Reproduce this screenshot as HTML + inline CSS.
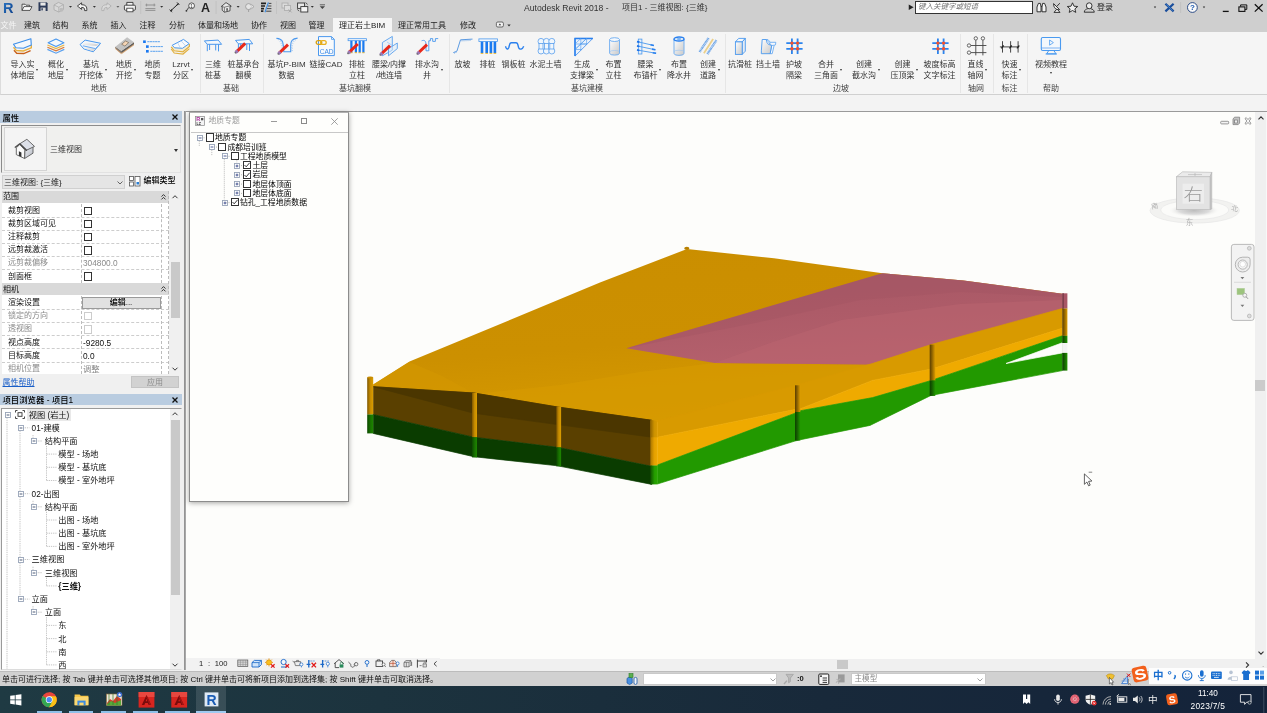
<!DOCTYPE html>
<html lang="zh"><head><meta charset="utf-8"><title>Autodesk Revit 2018</title>
<style>
*{box-sizing:border-box;margin:0;padding:0}
html,body{width:1267px;height:713px;overflow:hidden;background:#f0f0f0}
body{position:relative;font-family:"Liberation Sans","Noto Sans CJK SC",sans-serif;font-size:8px;color:#222;line-height:1}
.abs{position:absolute}
svg{position:absolute;overflow:visible}
.t{position:absolute;white-space:nowrap;line-height:10px;height:10px}
.c{transform:translateX(-50%);text-align:center}
.rb{color:#333}
.arr{width:0;height:0;border-left:1.7px solid transparent;border-right:1.7px solid transparent;border-top:2.2px solid #333}
.hl{height:0;border-top:1px dashed #cdcdcd}
.vl{width:0;border-left:1px dashed #bcbcbc}
.exp{width:5.5px;height:5.5px;border:1px solid #9aa8bc;background:#fff}
.exp:after{content:"";position:absolute;left:0.8px;top:1.3px;width:2px;height:0;border-top:1px solid #5a6a8a}
#root{position:absolute;left:0;top:0;width:1267px;height:713px;overflow:hidden;will-change:transform}

</style></head>
<body>
<div id="root">
<svg style="left:0;top:0;width:0;height:0" width="0" height="0">
<defs>
<linearGradient id="gg1" x1="0" y1="0" x2="1" y2="1"><stop offset="0" stop-color="#fff"/><stop offset="1" stop-color="#c8c8c8"/></linearGradient>
<linearGradient id="gpen" x1="0" y1="0" x2="1" y2="1"><stop offset="0" stop-color="#ff5040"/><stop offset="1" stop-color="#d81808"/></linearGradient>
<g id="pencil"><path d="M0 0L-8.8 8.4" stroke="#e8281a" stroke-width="3" stroke-linecap="butt"/><path d="M-7.6 7.3L-9.6 9.2" stroke="#9a78b8" stroke-width="3"/><path d="M-9.3 8.9L-10.3 9.8" stroke="#666" stroke-width="1.6"/></g>
<symbol id="i_layers1" viewBox="0 0 22 20" overflow="visible">
<path d="M1.9 14.3L4.7 17.3L11.8 17.5L18.6 14.6" fill="none" stroke="#c8601a" stroke-width="1.3"/>
<path d="M1.5 11.2L4.3 14.5L11.4 15L19.3 11.8V9" fill="none" stroke="#e8b040" stroke-width="1.4"/>
<path d="M1.5 8.2L18.9 2.7L19.3 9L11.4 12.2L3.9 11.8Z" fill="#f4f8fc" stroke="#3c8ee8" stroke-width="1.1" stroke-linejoin="round"/>
</symbol>
<symbol id="i_layers2" viewBox="0 0 22 20" overflow="visible">
<path d="M2.4 13.4L11 17.2L19.3 13.4" fill="none" stroke="#5aa0ee" stroke-width="1.2"/>
<path d="M2.4 11.2L11 14.8L19.3 11.2" fill="none" stroke="#d8783a" stroke-width="1.2"/>
<path d="M2.4 9L11 12.6L19.3 9" fill="none" stroke="#e8b848" stroke-width="1.3"/>
<path d="M3.1 6.7L11 3.1L18.9 6.7L11 10.6Z" fill="#f4f8fc" stroke="#4a98ee" stroke-width="1.1" stroke-linejoin="round"/>
</symbol>
<symbol id="i_pit" viewBox="0 0 22 20" overflow="visible">
<path d="M0.050 8.500L5.100 4.100L20.600 7.300L13.300 15.800L3.800 12.900Z" fill="#f2f6fb" stroke="#4a98ee" stroke-width="1" stroke-linejoin="round"/>
<path d="M3.200 6L19.300 8.400L16.100 10.100L2.600 8.800Z" fill="url(#gg1)"/>
<path d="M2.900 9.800L15.500 12.600L13.300 15.200L4.400 12.400Z" fill="url(#gg1)" opacity="0.800"/>
<path d="M2.900 9.800L15.500 12.600L19.900 8.400" fill="none" stroke="#5aa2f0" stroke-width="0.900" stroke-linejoin="round"/>
</symbol>
<symbol id="i_geo" viewBox="0 0 22 20" overflow="visible">
<path d="M2.400 10.700L8.400 15.100V18.300L2.400 12.900Z" fill="#c89464"/>
<path d="M8.400 15.100L21 6.300V9.200L8.400 18.300Z" fill="#d4a474"/>
<path d="M2.400 10.700L8.400 15.100V16.900L2.400 12Z" fill="#7a7a7a"/>
<path d="M8.400 15.100L21 6.300V7.900L8.400 16.900Z" fill="#5c5c5c"/>
<path d="M2.400 10.700L14.100 1.300L21 6.300L8.400 15.100Z" fill="#c2c2c2"/>
<path d="M8.700 8.200L12.500 5L15.700 6.600L11.900 10.100Z" fill="#f4d4b4" stroke="#6a5a4a" stroke-width="0.600" stroke-linejoin="round"/>
</symbol>
<symbol id="i_list" viewBox="0 0 22 20" overflow="visible">
<rect x="1.1" y="4.4" width="2.7" height="2.6" fill="#1a78f0"/><rect x="4" y="9.3" width="2.7" height="2.6" fill="#1a78f0"/><rect x="4" y="14" width="2.7" height="2.6" fill="#1a78f0"/>
<path d="M5.3 5.7H18.3M8.3 10.6H21.3M8.3 15.3H21.3" stroke="#4a98ee" stroke-width="0.9" stroke-dasharray="2.2 0.4"/>
</symbol>
<symbol id="i_zone" viewBox="0 0 22 20" overflow="visible">
<path d="M1.2 13L4.2 17L13 18L19.4 12.6" fill="none" stroke="#e0b040" stroke-width="1.2"/>
<path d="M1.2 10.8L4.2 14.8L13 15.8L19.4 10.4V8" fill="#f6ecd0" stroke="#e0b040" stroke-width="1.2"/>
<path d="M2.2 9.3L13.5 3.4L19.2 7.6L12.5 12.3L4.6 11.8Z" fill="#f8fafc" stroke="#4a98ee" stroke-width="1" stroke-linejoin="round"/>
<path d="M7.5 6.6L10.5 12.1M11 4.8L15.8 10" stroke="#a8c8f0" stroke-width="0.7"/>
</symbol>
<symbol id="i_table" viewBox="0 0 22 20" overflow="visible">
<path d="M2.4 4.9L16.2 4.1L19.6 8.3H5.3Z" fill="#f4f8fc" stroke="#4a98ee" stroke-width="1" stroke-linejoin="round"/>
<path d="M5.3 8.3V15.2M7.6 8.3V14M13.7 8.3V14.4M16.5 8.3V15.4" stroke="#4a98ee" stroke-width="1"/>
</symbol>
<symbol id="i_table2" viewBox="0 0 22 20" overflow="visible">
<path d="M2.5 4.4L16.3 3.4L19.7 7.8H5.4Z" fill="#f4f8fc" stroke="#4a98ee" stroke-width="1" stroke-linejoin="round"/>
<path d="M5.4 7.8V14.6M7.7 7.8V13.4M13.8 7.8V14M16.5 7.8V15" stroke="#4a98ee" stroke-width="1"/>
<use href="#pencil" x="12.2" y="7.4"/>
</symbol>
<symbol id="i_pbim" viewBox="0 0 22 20" overflow="visible">
<path d="M0.4 2.4C4 2.6 5.6 3.2 6.6 6C7.4 8.6 7.6 12 7.8 15.7H14.7V9C14.8 5 16 2.8 21.6 2.1" fill="none" stroke="#4a98ee" stroke-width="1.1"/>
<path d="M2 4L4 2.8M3.6 5.6L5.6 4.4M4.6 7.6L6.6 6.6M5.2 9.8L7.2 9M5.4 12L7.4 11.4M15.2 14L17 14.8M15.2 11.6L17 12.4M15.2 9.2L17 10M15.6 6.8L17.4 7.6M16.6 4.8L18.4 5.6M18.2 3.4L20 4.2" stroke="#8ab8f0" stroke-width="0.6"/>
<use href="#pencil" x="12" y="8.6"/>
</symbol>
<symbol id="i_cad" viewBox="0 0 22 20" overflow="visible">
<path d="M3.5 0.6H16.5L19.3 3.4V19.6H3.5Z" fill="#f8fafc" stroke="#4a98ee" stroke-width="1"/><path d="M16.5 0.6V3.4H19.3" fill="none" stroke="#4a98ee" stroke-width="0.8"/>
<text x="11.6" y="18" font-size="6.6" fill="#3a8ae8" text-anchor="middle" font-family="Liberation Sans,sans-serif">CAD</text>
<rect x="1.2" y="4.6" width="5.6" height="3.8" rx="1.9" fill="none" stroke="#d8a010" stroke-width="1.3"/><rect x="5.6" y="4.6" width="5.6" height="3.8" rx="1.9" fill="none" stroke="#e8b020" stroke-width="1.3"/>
</symbol>
<symbol id="i_pile_r" viewBox="0 0 22 20" overflow="visible">
<rect x="2.1" y="2.7" width="18.3" height="2" fill="#f4f8fc" stroke="#4a98ee" stroke-width="0.8"/>
<path d="M5.4 4.8V16.4M9.9 4.8V16.4M13.7 4.8V16.4M17.4 4.8V16.4" stroke="#1a7af0" stroke-width="2.2"/>
<path d="M4.3 16.7H6.5M8.8 16.7H11M12.6 16.7H14.8M16.3 16.7H18.5" stroke="#e8b020" stroke-width="0.9"/>
<use href="#pencil" x="11.8" y="8"/>
</symbol>
<symbol id="i_wall_r" viewBox="0 0 22 20" overflow="visible">
<path d="M4.4 6.5L14.3 0.4V14.2L4.4 19.8Z" fill="rgba(220,235,250,0.5)" stroke="#5aa0ee" stroke-width="0.9" stroke-linejoin="round"/>
<path d="M10.5 12.6L19.3 7V12.6L10.5 19.8Z" fill="rgba(220,235,250,0.5)" stroke="#5aa0ee" stroke-width="0.9" stroke-linejoin="round"/>
<path d="M9 6L14.3 9.5M10.5 12.6L14.3 10" stroke="#8ab8f0" stroke-width="0.6"/>
<use href="#pencil" x="12" y="9.6"/>
</symbol>
<symbol id="i_drain" viewBox="0 0 22 20" overflow="visible">
<path d="M5.6 4.8C8.6 3.6 9.8 5 10 8.2V14.8H12.8V4.8H14.4V2.6H16.7V5.4H19.4V2.6H22.2" fill="none" stroke="#4a98ee" stroke-width="0.9"/>
<use href="#pencil" x="11" y="8.6"/>
</symbol>
<symbol id="i_slope" viewBox="0 0 22 20" overflow="visible">
<path d="M1.3 16.6L4.9 15.2L8.5 3.8L20.5 3.1" fill="none" stroke="#4a90e0" stroke-width="0.9"/>
<path d="M10 4.2V5.4M12 4.1V5.3M14 4V5.2M16 3.9V5.1M18 3.8V5M2.5 16.6V17.6M4 16V17" stroke="#4a90e0" stroke-width="0.6"/>
</symbol>
<symbol id="i_pile" viewBox="0 0 22 20" overflow="visible">
<rect x="1.9" y="2.9" width="18.5" height="2.6" fill="#f4f8fc" stroke="#4a98ee" stroke-width="0.8"/>
<path d="M5 5.7V17M9.7 5.7V17M13.9 5.7V17M17.9 5.7V17" stroke="#1a7af0" stroke-width="2.6"/>
<path d="M3.7 17.4H6.3M8.4 17.4H11M12.6 17.4H15.2M16.6 17.4H19.2" stroke="#e8b020" stroke-width="0.9"/>
</symbol>
<symbol id="i_sheet" viewBox="0 0 22 20" overflow="visible">
<path d="M2.6 10.2C2.8 13 4.8 14 5.8 11.6C6.6 9.4 6.2 6.7 8.4 6.7H13C15.2 6.7 14.8 9.4 15.6 11.6C16.8 14.2 19.4 13.4 20.7 10.2" fill="none" stroke="#2a80ee" stroke-width="1.4"/>
</symbol>
<symbol id="i_cement" viewBox="0 0 22 20" overflow="visible">
<g fill="#f0f6fc" stroke="#5aa0ee" stroke-width="0.8"><circle cx="6" cy="5.4" r="3"/><circle cx="11.4" cy="5.4" r="3"/><circle cx="16.8" cy="5.4" r="3"/><circle cx="6" cy="15" r="3"/><circle cx="11.4" cy="15" r="3"/><circle cx="16.8" cy="15" r="3"/><rect x="4" y="7.4" width="4" height="5.6"/><rect x="9.4" y="7.4" width="4" height="5.6"/><rect x="14.8" y="7.4" width="4" height="5.6"/></g>
</symbol>
<symbol id="i_truss" viewBox="0 0 22 20" overflow="visible">
<path d="M4 2.4H21.8L4 20.1Z" fill="#eaf1fa" stroke="#3a8aee" stroke-width="0.800" stroke-linejoin="round"/><path d="M4 20.100V2.400H21.800" fill="none" stroke="#2a80ee" stroke-width="1.500" stroke-linejoin="miter"/>
<path d="M4 8H16M4 13.5H10.6M9.8 2.4V14.4M15.6 2.4V8.6M4 8L9.8 2.4M4 13.5L15.6 2.4M9.8 8L15.6 2.4M4 13.5L9.8 8M9.8 8L15.6 8" stroke="#4a98ee" stroke-width="0.6" fill="none"/>
</symbol>
<symbol id="i_cyl" viewBox="0 0 22 20" overflow="visible">
<path d="M6.6 3.6V17.4A5 2 0 0 0 16.5 17.4V3.6" fill="url(#gg1)" stroke="#6aaaf0" stroke-width="0.9"/>
<ellipse cx="11.55" cy="3.6" rx="4.95" ry="1.9" fill="#f4f8fc" stroke="#6aaaf0" stroke-width="0.9"/>
<path d="M6.6 16A5 1.8 0 0 1 16.5 16" fill="none" stroke="#9ac4f4" stroke-width="0.6"/>
</symbol>
<symbol id="i_anchor" viewBox="0 0 22 20" overflow="visible">
<rect x="3.3" y="3.1" width="3.6" height="14.9" fill="#e8f0fa" stroke="#4a98ee" stroke-width="0.8"/>
<path d="M3.3 5.9L18.9 9.5M3.3 10.2L20.4 13.8M3.3 14.2L21.1 17.3" stroke="#4a98ee" stroke-width="0.9"/>
<path d="M15.5 8.7L18.9 9.5M17 13.1L20.4 13.8M17.7 16.7L21.1 17.3" stroke="#2a80ee" stroke-width="1.6"/>
<path d="M2 5.6L4.4 6.2M2 9.9L4.4 10.5M2 13.9L4.4 14.5" stroke="#1a70e8" stroke-width="1.8"/>
</symbol>
<symbol id="i_well" viewBox="0 0 22 20" overflow="visible">
<path d="M6 3V17.4A5 2 0 0 0 16 17.4V3" fill="url(#gg1)" stroke="#6aaaf0" stroke-width="0.9"/>
<ellipse cx="11" cy="3" rx="5" ry="2" fill="#f4f8fc" stroke="#2a80ee" stroke-width="1.4"/>
<ellipse cx="11" cy="3" rx="2.6" ry="0.8" fill="#4a98ee"/>
<path d="M6 16A5 1.8 0 0 1 16 16" fill="none" stroke="#9ac4f4" stroke-width="0.6"/>
</symbol>
<symbol id="i_road" viewBox="0 0 22 20" overflow="visible">
<path d="M2.6 15.9L11.8 1.7" stroke="#5a9ae6" stroke-width="2.4" stroke-dasharray="0.8 0.5"/>
<path d="M6.9 17.3L16.1 3.1" stroke="#ecd08a" stroke-width="1.8"/>
<path d="M10.4 18L19.6 3.8" stroke="#5a9ae6" stroke-width="2.4" stroke-dasharray="0.8 0.5"/>
</symbol>
<symbol id="i_box" viewBox="0 0 22 20" overflow="visible">
<path d="M6.4 5.9L9.7 2.4H16.3L13.2 5.9Z" fill="#f4f8fc" stroke="#4a98ee" stroke-width="0.9" stroke-linejoin="round"/>
<path d="M13.2 5.9L16.3 2.4V15.2L13.2 18.4Z" fill="#e4ecf6" stroke="#4a98ee" stroke-width="0.9" stroke-linejoin="round"/>
<rect x="6.4" y="5.9" width="6.8" height="12.5" fill="url(#gg1)" stroke="#4a98ee" stroke-width="0.9"/>
</symbol>
<symbol id="i_retain" viewBox="0 0 22 20" overflow="visible">
<path d="M9.300 3.500H10.900L13.400 6.300H18.800L18.500 8.800L17.200 9.200L15.200 17.700H13.100L14.700 9.500Z" fill="#f6f9fd" stroke="#5aa2f0" stroke-width="0.800" stroke-linejoin="round"/>
<path d="M5.200 3.500H9.300L9.600 5.400C10 7 10.600 7.800 11.600 8.400L14.700 9.500L13.100 17.700H4.300L4.400 14.200Z" fill="url(#gg1)" stroke="#4a98ee" stroke-width="0.900" stroke-linejoin="round"/>
<path d="M11.600 8.400L13.400 6.300M14.700 9.500L17.200 9.200" fill="none" stroke="#5aa2f0" stroke-width="0.700"/>
</symbol>
<symbol id="i_hash" viewBox="0 0 22 20" overflow="visible">
<path d="M8.9 2.4V18M14.6 2.4V18M3.3 7.1H19.6M3.3 12.8H19.6" stroke="#2a84ee" stroke-width="1.800"/>
<g fill="#f4502c"><circle cx="8.9" cy="7.1" r="1.700"/><circle cx="14.6" cy="7.1" r="1.700"/><circle cx="8.9" cy="12.8" r="1.700"/><circle cx="14.6" cy="12.8" r="1.700"/></g>
</symbol>
<symbol id="i_grid" viewBox="0 0 22 20" overflow="visible">
<path d="M10.8 4.2V19.4M17.9 4.2V19.4M5.8 9.5H21.4M5.8 16.6H21.4" stroke="#444" stroke-width="0.9"/>
<g fill="#f8f8f8" stroke="#444" stroke-width="0.8"><circle cx="10.8" cy="2.4" r="1.7"/><circle cx="17.9" cy="2.4" r="1.7"/><circle cx="4" cy="9.5" r="1.7"/><circle cx="4" cy="16.6" r="1.7"/></g>
</symbol>
<symbol id="i_dim" viewBox="0 0 22 20" overflow="visible">
<path d="M0.9 10.9H20.1M3.5 5.2V16.6M11.6 5.2V16.6M19.1 5.2V16.6" stroke="#333" stroke-width="0.9"/>
<path d="M2.3 12.3L4.7 9.5M10.4 12.3L12.8 9.5M17.9 12.3L20.3 9.5" stroke="#222" stroke-width="1.2"/>
</symbol>
<symbol id="i_video" viewBox="0 0 22 20" overflow="visible">
<rect x="1.3" y="1.5" width="19.2" height="13" rx="1.4" fill="#f4f8fc" stroke="#4a9af0" stroke-width="1.1"/>
<path d="M1.3 12H20.5" stroke="#4a9af0" stroke-width="0.7"/>
<path d="M9.6 4L13.4 6.6L9.6 9.2Z" fill="none" stroke="#4a9af0" stroke-width="0.8" stroke-linejoin="round"/>
<path d="M8.8 14.5L6.6 17.8H16L13.8 14.5" fill="none" stroke="#4a9af0" stroke-width="1"/><path d="M5.6 18H17" stroke="#4a9af0" stroke-width="1"/>
</symbol>
</defs></svg>

<div class="abs" id="titlebar" style="left:0;top:0;width:1267px;height:32px;background:#cfcfcf"></div>
<div class="t" style="left:524px;top:3.100px;font-size:8.600px;color:#333">Autodesk Revit 2018 -</div>
<div class="t" style="left:622px;top:3.300px;font-size:8px;color:#333">项目1 - 三维视图: {三维}</div>
<div class="abs" style="left:914.500px;top:0.800px;width:118.500px;height:13.600px;background:#fff;border:1px solid #333;border-top-width:1px"></div>
<div class="t" style="left:918px;top:2px;font-size:7.500px;color:#777;font-style:italic">键入关键字或短语</div>
<div class="t" style="left:908px;top:2px;font-size:6px;color:#222">▶</div>
<div class="t" style="left:1097px;top:3px;font-size:8px;color:#222">登录</div>
<!-- tabs -->
<div class="abs" style="left:333px;top:17.500px;width:59px;height:15px;background:#f5f5f5"></div>
<div class="t c" style="left:8.500px;top:21px;color:#f6f6f6">文件</div>
<div class="t c" style="left:32px;top:21px">建筑</div>
<div class="t c" style="left:60.5px;top:21px">结构</div>
<div class="t c" style="left:89.5px;top:21px">系统</div>
<div class="t c" style="left:118.5px;top:21px">插入</div>
<div class="t c" style="left:147.5px;top:21px">注释</div>
<div class="t c" style="left:177px;top:21px">分析</div>
<div class="t c" style="left:218px;top:21px">体量和场地</div>
<div class="t c" style="left:259px;top:21px">协作</div>
<div class="t c" style="left:288px;top:21px">视图</div>
<div class="t c" style="left:316.5px;top:21px">管理</div>
<div class="t c" style="left:362px;top:21px">理正岩土BIM</div>
<div class="t c" style="left:422px;top:21px">理正常用工具</div>
<div class="t c" style="left:468px;top:21px">修改</div>

<svg id="qat" style="left:0;top:0" width="1267" height="17" viewBox="0 0 1267 17">
<defs><linearGradient id="gR" x1="0" y1="0" x2="1" y2="1"><stop offset="0" stop-color="#2a78c8"/><stop offset="1" stop-color="#0e3c84"/></linearGradient></defs>
<text x="3" y="13" font-size="14.5" font-weight="bold" fill="url(#gR)" font-family="Liberation Sans,sans-serif" textLength="10.5" lengthAdjust="spacingAndGlyphs">R</text>
<!-- open -->
<path d="M22 10.4V4.2H25L26 5.2H29.6V6.6" fill="#f0f0f0" stroke="#333" stroke-width="0.8"/><path d="M22 10.4L24 6.6H32L30 10.4Z" fill="#fafafa" stroke="#333" stroke-width="0.8" stroke-linejoin="round"/>
<!-- save -->
<path d="M38.5 2.2H46.6L47.6 3.2V11H38.5Z" fill="#2c3a58"/><rect x="40.4" y="2.6" width="5.2" height="3" fill="#e8e8e8"/><rect x="40.6" y="7.6" width="5" height="3.4" fill="#d8d8d8"/><rect x="41.4" y="8.2" width="1.4" height="2.2" fill="#2c3a58"/>
<!-- sync (gray) -->
<path d="M54 5L58.5 2.4L63.4 4.6V9.6L58.8 12L54 9.8Z" fill="#d8d8d8" stroke="#a8a8a8" stroke-width="0.8" stroke-linejoin="round"/><path d="M54 5L58.8 7.2L63.4 4.6M58.8 7.2V12" fill="none" stroke="#a8a8a8" stroke-width="0.7"/><circle cx="61.4" cy="9.8" r="2" fill="#bcbcbc"/>
<path d="M69 6L70.5 7.8L72 6Z" fill="#333"/>
<!-- undo -->
<path d="M77.4 6L81.6 2.8V4.8C85.6 4.6 87.2 6.6 86.8 10.6H84.6C84.8 8.2 84 7.4 81.6 7.4V9.4Z" fill="#f4f4f4" stroke="#333" stroke-width="0.9" stroke-linejoin="round"/>
<path d="M92.9 6L94.4 7.8L95.900 6Z" fill="#333"/>
<!-- redo gray -->
<path d="M111.2 6L107 2.8V4.8C103 4.600 101.400 6.600 101.800 10.600H104C103.800 8.200 104.600 7.400 107 7.400V9.400Z" fill="#dadada" stroke="#b0b0b0" stroke-width="0.9" stroke-linejoin="round"/>
<path d="M116.400 6L117.900 7.800L119.400 6Z" fill="#666"/>
<!-- print -->
<path d="M126.800 5.200V2.400H133V5.200" fill="#f4f4f4" stroke="#333" stroke-width="0.9"/><rect x="124.400" y="5.200" width="11" height="5" rx="1" fill="#f4f4f4" stroke="#333" stroke-width="0.9"/><rect x="126.800" y="8.200" width="6.200" height="3.600" fill="#fff" stroke="#333" stroke-width="0.8"/>
<path d="M140.700 1V14" stroke="#bdbdbd" stroke-width="0.7"/>
<!-- measure gray -->
<path d="M145.400 5H155.400M145.400 8.600H155.400M145.400 10.400H155.400" stroke="#8a8a8a" stroke-width="0.9"/><path d="M146.600 3.600V6.400M154.200 3.600V6.400" stroke="#8a8a8a" stroke-width="0.8"/>
<path d="M160.200 6L161.700 7.800L163.200 6Z" fill="#333"/>
<!-- aligned dim -->
<path d="M170.500 11L178.500 3.600" stroke="#222" stroke-width="1"/><path d="M169.600 9.600L172 12.200M177 2.400L179.400 5" stroke="#222" stroke-width="0.9"/><path d="M170.500 11L172.600 10.400L171.400 9Z M178.500 3.600L176.400 4.200L177.600 5.600Z" fill="#222"/>
<!-- tag -->
<circle cx="191.600" cy="5.800" r="2.900" fill="#f8f8f8" stroke="#333" stroke-width="0.8"/><text x="191.600" y="7.600" font-size="4.600" text-anchor="middle" fill="#222" font-family="Liberation Sans,sans-serif">1</text><path d="M188.800 7.400L186.400 10.800" stroke="#333" stroke-width="0.9"/><circle cx="186.400" cy="10.800" r="0.900" fill="#333"/>
<text x="201" y="12" font-size="12.500" font-weight="bold" fill="#222" font-family="Liberation Sans,sans-serif">A</text>
<path d="M216.100 1V14" stroke="#bdbdbd" stroke-width="0.700"/>
<!-- 3d house -->
<path d="M221.400 6.400L226 2.600L231 5.800V6.800L230 6.400V10.800L224.400 12.200L222.200 10.200V6.600Z" fill="#e8e8e8" stroke="#444" stroke-width="0.9" stroke-linejoin="round"/><path d="M224.400 7.200V12.200M224.400 7.200L230 5.800M221.400 6.400L224.400 7.200" fill="none" stroke="#555" stroke-width="0.7"/><rect x="226.200" y="8.200" width="1.800" height="2.600" fill="#666"/>
<path d="M236.600 6L238.100 7.800L239.600 6Z" fill="#333"/>
<!-- section gray -->
<circle cx="248.600" cy="6.600" r="3" fill="#e4e4e4" stroke="#9c9c9c" stroke-width="0.900"/><path d="M251.400 4.400L254 6.600L251.400 8.800" fill="#e4e4e4" stroke="#9c9c9c" stroke-width="0.800"/><path d="M248.600 9.600V12" stroke="#9c9c9c" stroke-width="0.900"/>
<!-- thin lines -->
<path d="M261 3.400H266M261 6H265M261 8.600H264M261 11.200H263.400" stroke="#222" stroke-width="1.700"/><path d="M268.600 3.400H271.400M267.800 6H271.400M267 8.600H271.400M266.200 11.200H271.400" stroke="#222" stroke-width="0.800"/><path d="M268.400 2.400L265 12.200" stroke="#3a8ee8" stroke-width="1.100"/>
<path d="M276.500 1V14" stroke="#bdbdbd" stroke-width="0.700"/>
<!-- close hidden gray -->
<rect x="282" y="3" width="6" height="5" fill="#dcdcdc" stroke="#aaa" stroke-width="0.800"/><rect x="284.400" y="5.400" width="6" height="5" fill="#dcdcdc" stroke="#aaa" stroke-width="0.800"/><path d="M288.600 9.400L291.600 12.400M291.600 9.400L288.600 12.400" stroke="#aaa" stroke-width="1"/>
<!-- switch windows -->
<rect x="297.600" y="3" width="7" height="5.400" fill="#e8e8e8" stroke="#333" stroke-width="0.900"/><rect x="300.800" y="6.600" width="7" height="5.400" fill="#f4f4f4" stroke="#333" stroke-width="0.900"/><path d="M305.600 2.600L307.600 4.400M299 11.200L297.400 9.400" stroke="#333" stroke-width="0.800"/>
<path d="M310.800 6L312.300 7.800L313.800 6Z" fill="#333"/>
<path d="M319.800 4.800H325" stroke="#444" stroke-width="0.800"/><path d="M319.800 6.200L322.400 9L325 6.200Z" fill="#444"/>
<!-- right side -->
<g stroke="#222" stroke-width="0.900" fill="#f4f4f4"><path d="M1037 11.800V7L1038.400 3.400H1040.400L1041 7V11.800ZM1042 11.800V7L1042.600 3.400H1044.600L1046 7V11.800Z"/><path d="M1041 6.400H1042" fill="none"/></g>
<path d="M1053.600 3.600C1053.600 8 1056 10 1059.600 9.600ZM1056.600 9.400L1054 12.400H1060L1057.600 9.600M1056.800 6.400L1059.800 3.200" fill="#eee" stroke="#222" stroke-width="0.900" stroke-linejoin="round"/>
<path d="M1072.500 2.800L1074 6.200L1077.700 6.500L1074.900 8.900L1075.800 12.400L1072.500 10.500L1069.200 12.400L1070.100 8.900L1067.300 6.500L1071 6.200Z" fill="#f0f0f0" stroke="#222" stroke-width="0.900" stroke-linejoin="round"/>
<path d="M1086.400 5.800a2.800 3 0 1 1 5.600 0a2.800 3 0 1 1 -5.600 0ZM1084.200 12.200C1084.600 9.800 1086 9.200 1087.600 8.800M1094.300 12.200C1093.900 9.800 1092.500 9.200 1090.900 8.800M1084.200 12.200H1094.300" fill="#eee" stroke="#222" stroke-width="0.900"/>
<path d="M1153.800 6.600L1155 8.200L1156.200 6.600Z" fill="#333"/>
<path d="M1165.400 3.800L1173.600 11.400M1173.600 3.800L1165.400 11.400" stroke="#1a4e9c" stroke-width="2.200"/><path d="M1166.400 4.600L1172.600 10.600" stroke="#5a9ae0" stroke-width="0.700"/>
<path d="M1180.600 2V13" stroke="#bdbdbd" stroke-width="0.700"/>
<circle cx="1192.400" cy="7.500" r="4.900" fill="#fafafa" stroke="#1a3c7c" stroke-width="0.900"/><text x="1192.400" y="10.400" font-size="8" font-weight="bold" fill="#1a58b0" text-anchor="middle" font-family="Liberation Sans,sans-serif">?</text>
<path d="M1202.800 6.600L1204 8.200L1205.200 6.600Z" fill="#333"/>
<path d="M1222.800 11.400H1228.700" stroke="#111" stroke-width="1.300"/>
<path d="M1240.600 6.600V4.900H1246.800V9.400H1245" fill="none" stroke="#111" stroke-width="1"/><rect x="1238.900" y="6.900" width="6" height="4.500" fill="none" stroke="#111" stroke-width="1.100"/>
<path d="M1254.800 4.200L1262.600 11.600M1262.600 4.200L1254.800 11.600" stroke="#111" stroke-width="1.300"/>
<!-- tab row icon -->
<rect x="496.400" y="22" width="7" height="5" rx="1.400" fill="#f4f4f4" stroke="#333" stroke-width="0.700"/><path d="M498.600 25.200L499.900 23.600L501.200 25.200Z" fill="#333"/>
</svg>
<svg style="left:507px;top:24px" width="4" height="3" viewBox="0 0 4 3"><path d="M0.300 0.400L2 2.400L3.700 0.400Z" fill="#333"/></svg>

<div class="abs" id="ribbon" style="left:0;top:32px;width:1267px;height:62.800px;background:#f5f5f5;border-bottom:1px solid #d0d0d0;border-left:1px solid #dcdcdc"></div>
<div class="abs" style="left:0;top:94.800px;width:1267px;height:16.200px;background:#f3f3f3"></div>
<div class="abs" style="left:199.5px;top:34px;width:1px;height:59px;background:#e6e6e6"></div>
<div class="abs" style="left:262.5px;top:34px;width:1px;height:59px;background:#e6e6e6"></div>
<div class="abs" style="left:448.5px;top:34px;width:1px;height:59px;background:#e6e6e6"></div>
<div class="abs" style="left:724.5px;top:34px;width:1px;height:59px;background:#e6e6e6"></div>
<div class="abs" style="left:959.5px;top:34px;width:1px;height:59px;background:#e6e6e6"></div>
<div class="abs" style="left:992.5px;top:34px;width:1px;height:59px;background:#e6e6e6"></div>
<div class="abs" style="left:1026.5px;top:34px;width:1px;height:59px;background:#e6e6e6"></div>
<div class="t c rb" style="left:22.5px;top:60.2px">导入实</div>
<div class="t c rb" style="left:22.5px;top:70.8px">体地层</div>
<div class="abs arr" style="left:36.3px;top:69.300px"></div>
<svg style="left:11.5px;top:36px" width="22" height="20" viewBox="0 0 22 20"><use href="#i_layers1"/></svg>
<div class="t c rb" style="left:56.0px;top:60.2px">概化</div>
<div class="t c rb" style="left:56.0px;top:70.8px">地层</div>
<div class="abs arr" style="left:65.8px;top:69.300px"></div>
<svg style="left:45.0px;top:36px" width="22" height="20" viewBox="0 0 22 20"><use href="#i_layers2"/></svg>
<div class="t c rb" style="left:91.0px;top:60.2px">基坑</div>
<div class="t c rb" style="left:91.0px;top:70.8px">开挖体</div>
<div class="abs arr" style="left:104.8px;top:69.300px"></div>
<svg style="left:80.0px;top:36px" width="22" height="20" viewBox="0 0 22 20"><use href="#i_pit"/></svg>
<div class="t c rb" style="left:124.0px;top:60.2px">地质</div>
<div class="t c rb" style="left:124.0px;top:70.8px">开挖</div>
<div class="abs arr" style="left:133.8px;top:69.300px"></div>
<svg style="left:113.0px;top:36px" width="22" height="20" viewBox="0 0 22 20"><use href="#i_geo"/></svg>
<div class="t c rb" style="left:152.5px;top:60.2px">地质</div>
<div class="t c rb" style="left:152.5px;top:70.8px">专题</div>
<svg style="left:141.5px;top:36px" width="22" height="20" viewBox="0 0 22 20"><use href="#i_list"/></svg>
<div class="t c rb" style="left:181.0px;top:60.2px">Lzrvt</div>
<div class="t c rb" style="left:181.0px;top:70.8px">分区</div>
<div class="abs arr" style="left:190.8px;top:69.300px"></div>
<svg style="left:170.0px;top:36px" width="22" height="20" viewBox="0 0 22 20"><use href="#i_zone"/></svg>
<div class="t c rb" style="left:213.0px;top:60.2px">三维</div>
<div class="t c rb" style="left:213.0px;top:70.8px">桩基</div>
<svg style="left:202.0px;top:36px" width="22" height="20" viewBox="0 0 22 20"><use href="#i_table"/></svg>
<div class="t c rb" style="left:243.5px;top:60.2px">桩基承台</div>
<div class="t c rb" style="left:243.5px;top:70.8px">翻模</div>
<svg style="left:232.5px;top:36px" width="22" height="20" viewBox="0 0 22 20"><use href="#i_table2"/></svg>
<div class="t c rb" style="left:286.5px;top:60.2px">基坑P-BIM</div>
<div class="t c rb" style="left:286.5px;top:70.8px">数据</div>
<svg style="left:275.5px;top:36px" width="22" height="20" viewBox="0 0 22 20"><use href="#i_pbim"/></svg>
<div class="t c rb" style="left:326.0px;top:60.2px">链接CAD</div>
<svg style="left:315.0px;top:36px" width="22" height="20" viewBox="0 0 22 20"><use href="#i_cad"/></svg>
<div class="t c rb" style="left:357.0px;top:60.2px">排桩</div>
<div class="t c rb" style="left:357.0px;top:70.8px">立柱</div>
<svg style="left:346.0px;top:36px" width="22" height="20" viewBox="0 0 22 20"><use href="#i_pile_r"/></svg>
<div class="t c rb" style="left:389.0px;top:60.2px">腰梁/内撑</div>
<div class="t c rb" style="left:389.0px;top:70.8px">/地连墙</div>
<svg style="left:378.0px;top:36px" width="22" height="20" viewBox="0 0 22 20"><use href="#i_wall_r"/></svg>
<div class="t c rb" style="left:427.0px;top:60.2px">排水沟</div>
<div class="t c rb" style="left:427.0px;top:70.8px">井</div>
<div class="abs arr" style="left:440.8px;top:69.300px"></div>
<svg style="left:416.0px;top:36px" width="22" height="20" viewBox="0 0 22 20"><use href="#i_drain"/></svg>
<div class="t c rb" style="left:462.5px;top:60.2px">放坡</div>
<svg style="left:451.5px;top:36px" width="22" height="20" viewBox="0 0 22 20"><use href="#i_slope"/></svg>
<div class="t c rb" style="left:487.5px;top:60.2px">排桩</div>
<svg style="left:476.5px;top:36px" width="22" height="20" viewBox="0 0 22 20"><use href="#i_pile"/></svg>
<div class="t c rb" style="left:513.5px;top:60.2px">钢板桩</div>
<svg style="left:502.5px;top:36px" width="22" height="20" viewBox="0 0 22 20"><use href="#i_sheet"/></svg>
<div class="t c rb" style="left:545.5px;top:60.2px">水泥土墙</div>
<svg style="left:534.5px;top:36px" width="22" height="20" viewBox="0 0 22 20"><use href="#i_cement"/></svg>
<div class="t c rb" style="left:582.0px;top:60.2px">生成</div>
<div class="t c rb" style="left:582.0px;top:70.8px">支撑梁</div>
<div class="abs arr" style="left:595.8px;top:69.300px"></div>
<svg style="left:571.0px;top:36px" width="22" height="20" viewBox="0 0 22 20"><use href="#i_truss"/></svg>
<div class="t c rb" style="left:613.5px;top:60.2px">布置</div>
<div class="t c rb" style="left:613.5px;top:70.8px">立柱</div>
<svg style="left:602.5px;top:36px" width="22" height="20" viewBox="0 0 22 20"><use href="#i_cyl"/></svg>
<div class="t c rb" style="left:645.5px;top:60.2px">腰梁</div>
<div class="t c rb" style="left:645.5px;top:70.8px">布锚杆</div>
<div class="abs arr" style="left:659.3px;top:69.300px"></div>
<svg style="left:634.5px;top:36px" width="22" height="20" viewBox="0 0 22 20"><use href="#i_anchor"/></svg>
<div class="t c rb" style="left:679.0px;top:60.2px">布置</div>
<div class="t c rb" style="left:679.0px;top:70.8px">降水井</div>
<svg style="left:668.0px;top:36px" width="22" height="20" viewBox="0 0 22 20"><use href="#i_well"/></svg>
<div class="t c rb" style="left:708.0px;top:60.2px">创建</div>
<div class="t c rb" style="left:708.0px;top:70.8px">道路</div>
<div class="abs arr" style="left:717.8px;top:69.300px"></div>
<svg style="left:697.0px;top:36px" width="22" height="20" viewBox="0 0 22 20"><use href="#i_road"/></svg>
<div class="t c rb" style="left:740.0px;top:60.2px">抗滑桩</div>
<svg style="left:729.0px;top:36px" width="22" height="20" viewBox="0 0 22 20"><use href="#i_box"/></svg>
<div class="t c rb" style="left:768.0px;top:60.2px">挡土墙</div>
<svg style="left:757.0px;top:36px" width="22" height="20" viewBox="0 0 22 20"><use href="#i_retain"/></svg>
<div class="t c rb" style="left:794.0px;top:60.2px">护坡</div>
<div class="t c rb" style="left:794.0px;top:70.8px">隔梁</div>
<svg style="left:783.0px;top:36px" width="22" height="20" viewBox="0 0 22 20"><use href="#i_hash"/></svg>
<div class="t c rb" style="left:826.0px;top:60.2px">合并</div>
<div class="t c rb" style="left:826.0px;top:70.8px">三角面</div>
<div class="abs arr" style="left:839.8px;top:69.300px"></div>
<div class="t c rb" style="left:864.0px;top:60.2px">创建</div>
<div class="t c rb" style="left:864.0px;top:70.8px">截水沟</div>
<div class="abs arr" style="left:877.8px;top:69.300px"></div>
<div class="t c rb" style="left:902.5px;top:60.2px">创建</div>
<div class="t c rb" style="left:902.5px;top:70.8px">压顶梁</div>
<div class="abs arr" style="left:916.3px;top:69.300px"></div>
<div class="t c rb" style="left:939.5px;top:60.2px">坡度标高</div>
<div class="t c rb" style="left:939.5px;top:70.8px">文字标注</div>
<svg style="left:928.5px;top:36px" width="22" height="20" viewBox="0 0 22 20"><use href="#i_hash"/></svg>
<div class="t c rb" style="left:975.5px;top:60.2px">直线</div>
<div class="t c rb" style="left:975.5px;top:70.8px">轴网</div>
<div class="abs arr" style="left:985.3px;top:69.300px"></div>
<svg style="left:964.5px;top:36px" width="22" height="20" viewBox="0 0 22 20"><use href="#i_grid"/></svg>
<div class="t c rb" style="left:1009.5px;top:60.2px">快速</div>
<div class="t c rb" style="left:1009.5px;top:70.8px">标注</div>
<div class="abs arr" style="left:1019.3px;top:69.300px"></div>
<svg style="left:998.5px;top:36px" width="22" height="20" viewBox="0 0 22 20"><use href="#i_dim"/></svg>
<div class="t c rb" style="left:1051.0px;top:60.2px">视频教程</div>
<svg style="left:1040.0px;top:36px" width="22" height="20" viewBox="0 0 22 20"><use href="#i_video"/></svg>
<div class="abs arr" style="left:1049.5px;top:72px"></div>
<div class="t c" style="left:99.0px;top:84.2px;color:#444">地质</div>
<div class="t c" style="left:231.0px;top:84.2px;color:#444">基础</div>
<div class="t c" style="left:355.0px;top:84.2px;color:#444">基坑翻模</div>
<div class="t c" style="left:587.0px;top:84.2px;color:#444">基坑建模</div>
<div class="t c" style="left:841.0px;top:84.2px;color:#444">边坡</div>
<div class="t c" style="left:976.0px;top:84.2px;color:#444">轴网</div>
<div class="t c" style="left:1009.5px;top:84.2px;color:#444">标注</div>
<div class="t c" style="left:1051.0px;top:84.2px;color:#444">帮助</div>
<div class="abs" style="left:0;top:110px;width:184px;height:562px;background:#f0f0f0"></div>
<div class="abs" style="left:0;top:111px;width:181.5px;height:12px;background:#b9cce0"></div>
<div class="t" style="left:2.5px;top:112.800px;color:#000;font-weight:500;font-size:8.400px">属性</div>
<svg style="left:171.5px;top:114px" width="6" height="6" viewBox="0 0 6 6"><path d="M0.5 0.5L5.5 5.5M5.5 0.5L0.5 5.5" stroke="#111" stroke-width="1.3"/></svg>
<div class="abs" style="left:1px;top:124.500px;width:180px;height:48.500px;background:#f0f0ee;border:1px solid #e2e2e2;border-top-color:#8c8c8c;border-left-color:#8c8c8c"></div>
<div class="abs" style="left:3.5px;top:127px;width:43.5px;height:43.5px;background:#f4f4f4;border:1px solid #d4d4d4"></div>
<svg style="left:14px;top:138px" width="22" height="22" viewBox="0 0 22 22"><defs><linearGradient id="hw" x1="0" y1="0" x2="1" y2="1"><stop offset="0" stop-color="#eceef2"/><stop offset="1" stop-color="#b4b8c2"/></linearGradient></defs><path d="M2.3 9.8L5.8 6.500L11 12.200L10.600 20.500L2.300 16.600Z" fill="#fbfbfb" stroke="#5a5a5a" stroke-width="0.900" stroke-linejoin="round"/><path d="M11 12.200L19 8.600V15.200L10.600 20.500Z" fill="url(#hw)" stroke="#5a5a5a" stroke-width="0.900" stroke-linejoin="round"/><path d="M5.800 5.800L12.900 1.300L20.500 8.400L12.500 12.200Z" fill="#dde0e8" stroke="#5a5a5a" stroke-width="0.900" stroke-linejoin="round"/><path d="M1.200 9.200L5.800 5.800L12.500 12.200" fill="none" stroke="#4a4a4a" stroke-width="1.300" stroke-linejoin="round" stroke-linecap="round"/><path d="M4.900 13.200L7.400 14.400V18.900L4.900 17.700Z" fill="#333"/></svg>
<div class="t" style="left:50px;top:145px;color:#333">三维视图</div>
<div class="abs arr" style="left:173.5px;top:148.5px;border-left-width:2.5px;border-right-width:2.5px;border-top-width:3px"></div>
<div class="abs" style="left:2px;top:175px;width:123px;height:14px;background:#e5e5e5;border:1px solid #d0d0d0"></div>
<div class="t" style="left:4px;top:177.5px;color:#222">三维视图: {三维}</div>
<svg style="left:116.5px;top:180.5px" width="6" height="4" viewBox="0 0 6 4"><path d="M0.5 0.5L3 3L5.5 0.5" stroke="#555" stroke-width="0.9" fill="none"/></svg>
<svg style="left:129px;top:175.5px" width="12" height="11" viewBox="0 0 12 11"><rect x="0.5" y="0.5" width="4" height="4" fill="#fff" stroke="#555" stroke-width="0.8"/><rect x="0.5" y="6" width="4" height="4" fill="#fff" stroke="#555" stroke-width="0.8"/><rect x="6" y="0.5" width="5" height="9.5" fill="#fff" stroke="#555" stroke-width="0.8"/><rect x="7.5" y="6" width="2.5" height="2.5" fill="#2a7fd4"/></svg>
<div class="t" style="left:143.5px;top:176px;color:#000;font-weight:500">编辑类型</div>
<div class="abs" style="left:2px;top:190.5px;width:166.5px;height:184px;background:#fff"></div>
<div class="abs" style="left:2px;top:190.7px;width:166.5px;height:12.4px;background:#d9d9d9"></div>
<div class="t" style="left:3px;top:192.2px;color:#111">范围</div>
<svg style="left:160.5px;top:193.9px" width="5" height="6" viewBox="0 0 5 6"><path d="M0.5 2.6L2.5 0.6L4.5 2.6M0.5 5.4L2.5 3.4L4.5 5.4" stroke="#222" stroke-width="0.9" fill="none"/></svg>
<div class="t" style="left:8px;top:205.7px;color:#111">裁剪视图</div>
<div class="abs" style="left:83.5px;top:206.5px;width:8.5px;height:8.5px;background:#fff;border:1px solid #333"></div>
<div class="abs hl" style="left:2px;top:216.6px;width:166.5px"></div>
<div class="t" style="left:8px;top:218.9px;color:#111">裁剪区域可见</div>
<div class="abs" style="left:83.5px;top:219.7px;width:8.5px;height:8.5px;background:#fff;border:1px solid #333"></div>
<div class="abs hl" style="left:2px;top:229.7px;width:166.5px"></div>
<div class="t" style="left:8px;top:232.0px;color:#111">注释裁剪</div>
<div class="abs" style="left:83.5px;top:232.8px;width:8.5px;height:8.5px;background:#fff;border:1px solid #333"></div>
<div class="abs hl" style="left:2px;top:242.9px;width:166.5px"></div>
<div class="t" style="left:8px;top:245.2px;color:#111">远剪裁激活</div>
<div class="abs" style="left:83.5px;top:246.0px;width:8.5px;height:8.5px;background:#fff;border:1px solid #333"></div>
<div class="abs hl" style="left:2px;top:256.1px;width:166.5px"></div>
<div class="t" style="left:8px;top:258.4px;color:#8a8a8a">远剪裁偏移</div>
<div class="t" style="left:83px;top:258.4px;color:#8a8a8a;font-size:8.3px">304800.0</div>
<div class="abs hl" style="left:2px;top:269.3px;width:166.5px"></div>
<div class="t" style="left:8px;top:271.6px;color:#111">剖面框</div>
<div class="abs" style="left:83.5px;top:272.4px;width:8.5px;height:8.5px;background:#fff;border:1px solid #333"></div>
<div class="abs hl" style="left:2px;top:282.5px;width:166.5px"></div>
<div class="abs" style="left:2px;top:283.0px;width:166.5px;height:12.4px;background:#d9d9d9"></div>
<div class="t" style="left:3px;top:284.5px;color:#111">相机</div>
<svg style="left:160.5px;top:286.2px" width="5" height="6" viewBox="0 0 5 6"><path d="M0.5 2.6L2.5 0.6L4.5 2.6M0.5 5.4L2.5 3.4L4.5 5.4" stroke="#222" stroke-width="0.9" fill="none"/></svg>
<div class="t" style="left:8px;top:297.9px;color:#111">渲染设置</div>
<div class="abs" style="left:82px;top:297.3px;width:78.5px;height:12px;background:#e1e1e1;border:1px solid #9a9a9a"></div>
<div class="t c" style="left:121px;top:298.1px;color:#000;font-weight:500">编辑...</div>
<div class="abs hl" style="left:2px;top:308.8px;width:166.5px"></div>
<div class="t" style="left:8px;top:311.1px;color:#8a8a8a">锁定的方向</div>
<div class="abs" style="left:83.5px;top:311.9px;width:8.5px;height:8.5px;background:#fff;border:1px solid #ccc"></div>
<div class="abs hl" style="left:2px;top:322.0px;width:166.5px"></div>
<div class="t" style="left:8px;top:324.3px;color:#8a8a8a">透视图</div>
<div class="abs" style="left:83.5px;top:325.1px;width:8.5px;height:8.5px;background:#fff;border:1px solid #ccc"></div>
<div class="abs hl" style="left:2px;top:335.2px;width:166.5px"></div>
<div class="t" style="left:8px;top:337.5px;color:#111">视点高度</div>
<div class="t" style="left:83px;top:337.5px;color:#111;font-size:8.3px">-9280.5</div>
<div class="abs hl" style="left:2px;top:348.4px;width:166.5px"></div>
<div class="t" style="left:8px;top:350.7px;color:#111">目标高度</div>
<div class="t" style="left:83px;top:350.7px;color:#111;font-size:8.3px">0.0</div>
<div class="abs hl" style="left:2px;top:361.5px;width:166.5px"></div>
<div class="t" style="left:8px;top:363.8px;color:#8a8a8a">相机位置</div>
<div class="t" style="left:83px;top:363.8px;color:#8a8a8a;font-size:8.3px">调整</div>
<div class="abs hl" style="left:2px;top:374.7px;width:166.5px"></div>
<div class="abs vl" style="left:80.500px;top:203.900px;height:79px"></div>
<div class="abs vl" style="left:80.500px;top:296.100px;height:78px"></div>
<div class="abs vl" style="left:160.500px;top:203.900px;height:79px"></div>
<div class="abs vl" style="left:160.500px;top:296.100px;height:78px"></div>
<div class="abs vl" style="left:168px;top:190.8px;height:183px"></div>
<div class="abs" style="left:0px;top:374px;width:182px;height:19px;background:#f0f0f0"></div>
<div class="abs" style="left:169px;top:190.5px;width:12px;height:183.5px;background:#f0f0f0"></div>
<div class="abs" style="left:170.5px;top:261.5px;width:9px;height:56.5px;background:#c9c9c9"></div>
<svg style="left:171.5px;top:195px" width="6" height="4" viewBox="0 0 6 4"><path d="M0.5 3.2L3 0.7L5.5 3.2" stroke="#333" stroke-width="1" fill="none"/></svg>
<svg style="left:171.5px;top:367px" width="6" height="4" viewBox="0 0 6 4"><path d="M0.5 0.7L3 3.2L5.5 0.7" stroke="#333" stroke-width="1" fill="none"/></svg>
<div class="t" style="left:2.500px;top:377.800px;color:#1a5fc8;text-decoration:underline">属性帮助</div>
<div class="abs" style="left:131px;top:376px;width:48px;height:12px;background:#d2d2d2;border:1px solid #c4c4c4"></div>
<div class="t c" style="left:155px;top:378px;color:#8c8c8c">应用</div>
<div class="abs" style="left:0;top:393.5px;width:181.5px;height:11.5px;background:#b9cce0"></div>
<div class="t" style="left:2.5px;top:395px;color:#000;font-weight:500;font-size:8.400px">项目浏览器 - 项目1</div>
<svg style="left:171.5px;top:396.5px" width="6" height="6" viewBox="0 0 6 6"><path d="M0.5 0.5L5.5 5.5M5.5 0.5L0.5 5.5" stroke="#111" stroke-width="1.3"/></svg>
<div class="abs" style="left:1px;top:407.5px;width:180.5px;height:262.500px;background:#fff;border:1px solid #9a9a9a;border-right-color:#f0f0f0;border-bottom-color:#dcdcdc"></div>
<div class="abs" style="left:169.5px;top:408.5px;width:11px;height:260.5px;background:#f0f0f0"></div>
<div class="abs" style="left:170.5px;top:419.5px;width:9.5px;height:175px;background:#c9c9c9"></div>
<svg style="left:172px;top:412px" width="6" height="4" viewBox="0 0 6 4"><path d="M0.5 3.2L3 0.7L5.5 3.2" stroke="#333" stroke-width="1" fill="none"/></svg>
<svg style="left:172px;top:663px" width="6" height="4" viewBox="0 0 6 4"><path d="M0.5 0.7L3 3.2L5.5 0.7" stroke="#333" stroke-width="1" fill="none"/></svg>
<svg style="left:0;top:0" width="184" height="713" viewBox="0 0 184 713"><path d="M7 417.6V669.0M22.5 427.8H29.5M33 435.0V438.5M36 441.0H42.5M46.5 454.1H56.5M46.5 467.3H56.5M46.5 480.5H56.5M22.5 493.7H29.5M33 500.8V504.3M36 506.8H42.5M46.5 520.0H56.5M46.5 533.2H56.5M46.5 546.4H56.5M22.5 559.5H29.5M33 566.7V570.2M36 572.7H42.5M46.5 585.9H56.5M22.5 599.1H29.5M33 606.2V609.7M36 612.2H42.5M46.5 625.4H56.5M46.5 638.6H56.5M46.5 651.8H56.5M46.5 664.9H56.5M20 430.8V596.1M46.5 446.0V480.5M46.5 511.8V546.4M46.5 577.7V585.9M46.5 617.2V664.9" stroke="#b8b8b8" stroke-width="0.8" fill="none" stroke-dasharray="1.3 0.9"/></svg>
<div class="abs" style="left:27px;top:408.6px;width:43.5px;height:12px;background:#e9e9e9"></div>
<svg style="left:14.5px;top:410.1px" width="10" height="9" viewBox="0 0 10 9"><path d="M0.5 2.5V0.5H2.5M7.5 0.5H9.5V2.5M9.5 6.5V8.5H7.5M2.5 8.5H0.5V6.5" stroke="#333" stroke-width="0.9" fill="none"/><rect x="3" y="2.7" width="4" height="3.6" fill="none" stroke="#333" stroke-width="0.9"/></svg>
<svg style="left:4.5px;top:411.6px" width="6" height="6" viewBox="0 0 6 6"><rect x="0.5" y="0.5" width="5" height="5" fill="#fff" stroke="#98a4b8" stroke-width="0.9"/><path d="M1.600 3H4.400" stroke="#3a4a6a" stroke-width="0.900"/></svg>
<div class="t" style="left:28.8px;top:410.5px;color:#111;font-size:8.2px;">视图 (岩土)</div>
<svg style="left:17.5px;top:424.8px" width="6" height="6" viewBox="0 0 6 6"><rect x="0.5" y="0.5" width="5" height="5" fill="#fff" stroke="#98a4b8" stroke-width="0.9"/><path d="M1.600 3H4.400" stroke="#3a4a6a" stroke-width="0.900"/></svg>
<div class="t" style="left:31.6px;top:423.7px;color:#111;font-size:8.2px;">01-建模</div>
<svg style="left:30.5px;top:438.0px" width="6" height="6" viewBox="0 0 6 6"><rect x="0.5" y="0.5" width="5" height="5" fill="#fff" stroke="#98a4b8" stroke-width="0.9"/><path d="M1.600 3H4.400" stroke="#3a4a6a" stroke-width="0.900"/></svg>
<div class="t" style="left:44.8px;top:436.9px;color:#111;font-size:8.2px;">结构平面</div>
<div class="t" style="left:58.3px;top:450.0px;color:#111;font-size:8.2px;">模型 - 场地</div>
<div class="t" style="left:58.3px;top:463.2px;color:#111;font-size:8.2px;">模型 - 基坑底</div>
<div class="t" style="left:58.3px;top:476.4px;color:#111;font-size:8.2px;">模型 - 室外地坪</div>
<svg style="left:17.5px;top:490.7px" width="6" height="6" viewBox="0 0 6 6"><rect x="0.5" y="0.5" width="5" height="5" fill="#fff" stroke="#98a4b8" stroke-width="0.9"/><path d="M1.600 3H4.400" stroke="#3a4a6a" stroke-width="0.900"/></svg>
<div class="t" style="left:31.6px;top:489.6px;color:#111;font-size:8.2px;">02-出图</div>
<svg style="left:30.5px;top:503.8px" width="6" height="6" viewBox="0 0 6 6"><rect x="0.5" y="0.5" width="5" height="5" fill="#fff" stroke="#98a4b8" stroke-width="0.9"/><path d="M1.600 3H4.400" stroke="#3a4a6a" stroke-width="0.900"/></svg>
<div class="t" style="left:44.8px;top:502.7px;color:#111;font-size:8.2px;">结构平面</div>
<div class="t" style="left:58.3px;top:515.9px;color:#111;font-size:8.2px;">出图 - 场地</div>
<div class="t" style="left:58.3px;top:529.1px;color:#111;font-size:8.2px;">出图 - 基坑底</div>
<div class="t" style="left:58.3px;top:542.2px;color:#111;font-size:8.2px;">出图 - 室外地坪</div>
<svg style="left:17.5px;top:556.5px" width="6" height="6" viewBox="0 0 6 6"><rect x="0.5" y="0.5" width="5" height="5" fill="#fff" stroke="#98a4b8" stroke-width="0.9"/><path d="M1.600 3H4.400" stroke="#3a4a6a" stroke-width="0.900"/></svg>
<div class="t" style="left:31.6px;top:555.4px;color:#111;font-size:8.2px;">三维视图</div>
<svg style="left:30.5px;top:569.7px" width="6" height="6" viewBox="0 0 6 6"><rect x="0.5" y="0.5" width="5" height="5" fill="#fff" stroke="#98a4b8" stroke-width="0.9"/><path d="M1.600 3H4.400" stroke="#3a4a6a" stroke-width="0.900"/></svg>
<div class="t" style="left:44.8px;top:568.6px;color:#111;font-size:8.2px;">三维视图</div>
<div class="t" style="left:58.3px;top:581.8px;color:#111;font-size:8.2px;font-weight:bold;">{三维}</div>
<svg style="left:17.5px;top:596.1px" width="6" height="6" viewBox="0 0 6 6"><rect x="0.5" y="0.5" width="5" height="5" fill="#fff" stroke="#98a4b8" stroke-width="0.9"/><path d="M1.600 3H4.400" stroke="#3a4a6a" stroke-width="0.900"/></svg>
<div class="t" style="left:31.6px;top:595.0px;color:#111;font-size:8.2px;">立面</div>
<svg style="left:30.5px;top:609.2px" width="6" height="6" viewBox="0 0 6 6"><rect x="0.5" y="0.5" width="5" height="5" fill="#fff" stroke="#98a4b8" stroke-width="0.9"/><path d="M1.600 3H4.400" stroke="#3a4a6a" stroke-width="0.900"/></svg>
<div class="t" style="left:44.8px;top:608.1px;color:#111;font-size:8.2px;">立面</div>
<div class="t" style="left:58.3px;top:621.3px;color:#111;font-size:8.2px;">东</div>
<div class="t" style="left:58.3px;top:634.5px;color:#111;font-size:8.2px;">北</div>
<div class="t" style="left:58.3px;top:647.6px;color:#111;font-size:8.2px;">南</div>
<div class="t" style="left:58.3px;top:660.8px;color:#111;font-size:8.2px;">西</div>
<div class="abs" id="canvas" style="left:184px;top:110.8px;width:1071px;height:548px;background:#fdfdfb;border-left:0 solid #8e8e8e;border-top:1.500px solid #9a9a9a"></div>
<div class="abs" style="left:184px;top:110.800px;width:2px;height:559.700px;background:linear-gradient(90deg,#8a8a8a,#b2b2b2)"></div>
<div class="abs" style="left:1255px;top:110.8px;width:12px;height:548px;background:#f0f0f0;border-top:1.500px solid #9a9a9a"></div>
<div class="abs" style="left:1255.200px;top:379.800px;width:9.800px;height:11px;background:#cbcbcb"></div>
<div class="abs" style="left:1265.800px;top:112px;width:1.200px;height:559px;background:#f8f8f8"></div>
<svg style="left:1257.5px;top:116px" width="6" height="4" viewBox="0 0 6 4"><path d="M0.5 3.4L3 0.8L5.5 3.4" stroke="#333" stroke-width="1.1" fill="none"/></svg>
<svg style="left:1257.5px;top:650.5px" width="6" height="4" viewBox="0 0 6 4"><path d="M0.5 0.6L3 3.2L5.5 0.6" stroke="#333" stroke-width="1.1" fill="none"/></svg>
<!-- mdi controls -->
<svg style="left:1219px;top:116px" width="35" height="10" viewBox="0 0 35 10">
<rect x="1.7" y="5.3" width="8" height="2.6" rx="0.8" fill="#f4f4f4" stroke="#808080" stroke-width="0.8"/>
<path d="M14 3L15.5 1.2H20.6L20.6 7L19.2 8.6H14Z" fill="#c4c4c4" stroke="#808080" stroke-width="0.8" stroke-linejoin="round"/><rect x="15.6" y="4" width="3" height="3" fill="#eee" stroke="#777" stroke-width="0.7"/>
<path d="M26 2.6L27.2 1.6L29 3.6L30.8 1.6L32 2.6L30.2 5L32 7.4L30.8 8.4L29 6.4L27.2 8.4L26 7.4L27.8 5Z" fill="#f8f8f8" stroke="#808080" stroke-width="0.8" stroke-linejoin="round"/>
</svg>
<!-- view cube -->
<svg style="left:1140px;top:160px" width="115" height="75" viewBox="0 0 115 75">
<defs><radialGradient id="vsh"><stop offset="0" stop-color="#bdbdbd"/><stop offset="0.6" stop-color="#dcdcdc"/><stop offset="1" stop-color="#f6f6f4" stop-opacity="0"/></radialGradient></defs>
<ellipse cx="54.7" cy="50.5" rx="44.7" ry="12.6" fill="#f2f2f0" stroke="#e4e4e4" stroke-width="0.6"/>
<ellipse cx="54.7" cy="50" rx="34" ry="9.5" fill="#fbfbf9" stroke="#e4e4e4" stroke-width="0.6"/>
<ellipse cx="54" cy="50.5" rx="25" ry="6.5" fill="url(#vsh)"/>
<text x="14.7" y="48.5" font-size="7" fill="#b0b0b0" text-anchor="middle" transform="rotate(-12 14.7 46.3)">南</text>
<text x="94.7" y="51" font-size="7" fill="#b0b0b0" text-anchor="middle" transform="rotate(12 94.7 49)">北</text>
<text x="49.400" y="64.500" font-size="7.500" fill="#b0b0b0" text-anchor="middle">东</text>
<polygon points="36.3,16.8 42.6,11.8 71.8,12.4 70,16.8" fill="#ebebeb" stroke="#b4b4b4" stroke-width="0.6"/>
<polygon points="70,16.8 71.8,12.4 71.8,49 70,49.6" fill="#c8c8c8" stroke="#b0b0b0" stroke-width="0.5"/>
<rect x="36.3" y="16.8" width="33.7" height="32.7" fill="#e3e3e3" stroke="#b8b8b8" stroke-width="0.6"/>
<rect x="42.6" y="23.7" width="21.4" height="20" fill="#ededed"/>
<text x="43.400" y="39.600" font-size="16" fill="#9a9a9a" font-family="Noto Sans CJK SC,sans-serif" font-weight="300" textLength="19.600" lengthAdjust="spacingAndGlyphs">右</text>
<path d="M48 14.6H62M55 13V16" stroke="#b0b0b0" stroke-width="0.6"/>
</svg>
<!-- nav bar -->
<svg style="left:1231px;top:244px" width="24" height="77" viewBox="0 0 24 77">
<rect x="0.4" y="0.4" width="22.6" height="76" rx="2.4" fill="#f3f3f3" stroke="#ababab" stroke-width="0.8"/>
<circle cx="18.3" cy="4.3" r="1.9" fill="#ddd" stroke="#aaa" stroke-width="0.6"/>
<circle cx="18.3" cy="72" r="1.9" fill="#ddd" stroke="#aaa" stroke-width="0.6"/>
<path d="M4.3 20.6a7.4 7.4 0 1 0 14.8 0V15.5a2.3 2.3 0 0 0 -2.3 -2.3H11.7a7.4 7.4 0 0 0 -7.4 7.4Z" fill="#ededed" stroke="#a4a4a4" stroke-width="0.8"/>
<circle cx="11.7" cy="20.6" r="4.6" fill="#f6f6f6" stroke="#a8a8a8" stroke-width="0.8"/>
<circle cx="11.7" cy="20.2" r="2.8" fill="#fff" stroke="#c4c4c4" stroke-width="0.5"/>
<path d="M9.5 33L11.4 35.2L13.3 33Z" fill="#777"/>
<path d="M3 38.3H20" stroke="#cfcfcf" stroke-width="0.7"/>
<rect x="6" y="44.3" width="7.6" height="6.4" fill="#9dc47e" stroke="#b4cfa0" stroke-width="0.5"/>
<circle cx="13.8" cy="51.3" r="2" fill="#f4f4f4" stroke="#999" stroke-width="0.7"/><path d="M15.2 52.8L17 54.8" stroke="#888" stroke-width="0.9"/>
<path d="M9.5 60.7L11.4 62.9L13.3 60.7Z" fill="#777"/>
</svg>
<!-- cursor -->
<svg style="left:1084px;top:471px" width="10" height="18" viewBox="0 0 10 18"><path d="M0.400 2.900V13.300L2.900 11L4.600 14.800L6.200 14.100L4.600 10.400L7.900 10Z" fill="#fff" stroke="#222" stroke-width="0.700" stroke-linejoin="round"/><path d="M4.700 1.200H8.200" stroke="#333" stroke-width="0.600"/></svg>

<svg id="model" style="left:0;top:0" width="1267" height="713" viewBox="0 0 1267 713">
<defs>
<linearGradient id="gpink" x1="0" y1="0" x2="0.25" y2="1"><stop offset="0" stop-color="#a65866"/><stop offset="0.500" stop-color="#ad5b68"/><stop offset="1" stop-color="#b4606c"/></linearGradient>
<linearGradient id="gtop" x1="0" y1="0" x2="0.35" y2="1"><stop offset="0" stop-color="#ca8e00"/><stop offset="0.6" stop-color="#cc9000"/><stop offset="1" stop-color="#d69a00"/></linearGradient>
<linearGradient id="gp4" x1="0" y1="0" x2="1" y2="0"><stop offset="0" stop-color="#a87400"/><stop offset="0.550" stop-color="#e4a000"/><stop offset="1" stop-color="#efaa00"/></linearGradient><linearGradient id="gp4u" x1="0" y1="0" x2="1" y2="0"><stop offset="0" stop-color="#8e6200"/><stop offset="0.550" stop-color="#cc9200"/><stop offset="1" stop-color="#d89a00"/></linearGradient>
<linearGradient id="gp4g" x1="0" y1="0" x2="1" y2="0"><stop offset="0" stop-color="#0e5200"/><stop offset="0.6" stop-color="#249c00"/><stop offset="1" stop-color="#2aa800"/></linearGradient>
<linearGradient id="gpo" x1="0" y1="0" x2="1" y2="0"><stop offset="0" stop-color="#7e5600"/><stop offset="0.500" stop-color="#c48a00"/><stop offset="1" stop-color="#dc9e00"/></linearGradient>
<linearGradient id="gpg" x1="0" y1="0" x2="1" y2="0"><stop offset="0" stop-color="#0c4800"/><stop offset="0.550" stop-color="#187200"/><stop offset="1" stop-color="#1e8600"/></linearGradient>
<linearGradient id="gps" x1="0" y1="0" x2="1" y2="0"><stop offset="0" stop-color="#5a3e00"/><stop offset="0.4" stop-color="#8a6000"/><stop offset="1" stop-color="#dc9c00"/></linearGradient>
<linearGradient id="gpsg" x1="0" y1="0" x2="1" y2="0"><stop offset="0" stop-color="#0c4000"/><stop offset="0.4" stop-color="#145c00"/><stop offset="1" stop-color="#229600"/></linearGradient>
</defs>
<!-- top face -->
<polygon points="373.2,387 373.200,384.600 409.5,361.500 600,282.600 687,249 774,258.3 882.5,273.3 963.4,280.4 1062.3,293.8 1062.3,310 931,346.100 872.3,365.100 795,387 657,422.300 651.8,421.300 557.6,408 473.7,394" fill="url(#gtop)"/>
<!-- lighter facets on top -->
<polygon points="373.2,386.7 373.200,384.600 409.3,362 440,375 473.7,393" fill="#d29600" opacity="0.8"/>
<polygon points="473.7,394 557.6,408 651.8,421.300 657,422.300 795,387 872.3,365 714.7,363.1 640,372 560,385" fill="#d59900" opacity="0.75"/>
<!-- pink -->
<polygon points="626.3,348.2 882.5,273.3 963.4,280.4 1062.3,293.8 1062.3,309.700 931,345.800 872.3,364.400 714.7,363.1" fill="url(#gpink)"/>
<polygon points="714.7,363.1 770,343 841.5,320 960,304 1062.3,300 1062.3,309.700 931,345.800 872.3,364.400 714.7,363.1" fill="#bc6670" opacity="0.45"/>
<polygon points="626.3,348.2 882.5,273.3 963.4,280.4 1062.3,293.8 1062.3,297 960,292 860,300 760,322" fill="#a05462" opacity="0.35"/>
<!-- right side: orange strip -->
<polygon points="657.4,420.8 795,385.5 872.3,363.6 931,344.6 1062.3,308.5 1062.3,328.2 931.5,369 872.5,380.4 800.5,408.7 795,409.4 657.4,437.2" fill="#d89a00" stroke="#d89a00" stroke-width="0.7" stroke-linejoin="round"/>
<!-- light orange band -->
<polygon points="657.4,437.2 795,409.4 800.5,408.7 872.5,380.4 931.5,369 1062.3,328.2 1062.3,335.8 931,380.5 872.5,397.6 800.5,410.7 795,413.2 657.4,465" fill="#efaa00" stroke="#efaa00" stroke-width="0.7" stroke-linejoin="round"/>
<!-- green band -->
<polygon points="657.4,465 795,413.2 800.5,410.7 872.5,397.6 931,380.5 1062.3,335.8 1062.3,370.6 931,395.4 870,425.4 800.5,439.7 795,441 657.4,484" fill="#229900" stroke="#229900" stroke-width="0.7" stroke-linejoin="round"/>
<polygon points="1006,363.5 1062.3,342.8 1062.3,352.9" fill="#fdfdfb" stroke="#fdfdfb" stroke-width="0.7" stroke-linejoin="round"/>
<!-- front-left face -->
<polygon points="373.2,386.7 473.7,393 557.6,407 651.8,420.3 651.8,466.3 557.6,447.3 473.7,437.2 373.2,414.5" fill="#5a4000" stroke="#5a4000" stroke-width="0.7" stroke-linejoin="round"/>
<polygon points="373.2,386.7 473.7,393 557.6,407 651.8,420.3 651.8,437.2 557.6,424.6 473.7,413.2" fill="#4b3600" stroke="#4b3600" stroke-width="0.7" stroke-linejoin="round"/>
<polygon points="373.2,414.5 473.7,437.2 557.6,447.3 651.8,466.3 651.8,484.4 557.6,465.8 473.7,456.7 373.2,433.4" fill="#0a3c00" stroke="#0a3c00" stroke-width="0.7" stroke-linejoin="round"/>
<!-- pillars -->
<rect x="367.2" y="377.4" width="6" height="37.2" fill="url(#gpo)"/><rect x="367.2" y="414.5" width="6" height="18.9" fill="url(#gpg)"/>
<ellipse cx="370.2" cy="377.6" rx="3" ry="1" fill="#c88c00"/>
<rect x="472" y="393" width="5" height="44.5" fill="url(#gpo)"/><rect x="472" y="437.2" width="5" height="20.2" fill="url(#gpg)"/>
<rect x="556.3" y="406.4" width="4.8" height="41.2" fill="url(#gpo)"/><rect x="556.3" y="447.3" width="4.8" height="19" fill="url(#gpg)"/>
<rect x="650.3" y="420.3" width="7.1" height="45.5" fill="url(#gp4)"/><rect x="650.300" y="420.300" width="7.100" height="17" fill="url(#gp4u)"/><rect x="650.3" y="465.5" width="7.1" height="18.9" fill="url(#gp4g)"/>
<rect x="795" y="385.3" width="5.3" height="27" fill="url(#gps)"/><rect x="795" y="412" width="5.3" height="28.5" fill="url(#gpsg)"/>
<rect x="929.7" y="344.6" width="5.6" height="36" fill="url(#gps)"/><rect x="929.7" y="380.5" width="5.6" height="15.4" fill="url(#gpsg)"/>
<rect x="1062.3" y="293.3" width="5.1" height="15.3" fill="#a85666"/><rect x="1062.3" y="293.3" width="1.6" height="15.3" fill="#7a3c4a"/>
<rect x="1062.3" y="308.5" width="5.1" height="27.4" fill="url(#gps)"/>
<rect x="1062.3" y="335.8" width="5.1" height="7.2" fill="url(#gpsg)"/>
<rect x="1062.3" y="343" width="5.1" height="10" fill="#f4f4f4"/>
<rect x="1062.3" y="352.9" width="5.1" height="17.7" fill="url(#gpsg)"/>
<ellipse cx="686.8" cy="248.2" rx="2.6" ry="1.5" fill="#b88000"/>
</svg>

<div class="abs" style="left:189px;top:111.5px;width:160px;height:390.5px;background:#fefefc;border:1px solid #8c8c8c;border-top-color:#b0b0b0;box-shadow:0 1px 5px rgba(0,0,0,0.35)"></div>
<div class="abs" style="left:191px;top:131.5px;width:157px;height:369.5px;background:#fefefc;border-top:1px solid #c8c8c8"></div>
<svg style="left:195px;top:115.5px" width="10" height="10" viewBox="0 0 10 10"><rect x="0.4" y="0.4" width="9.2" height="9.2" fill="#f4f4f4" stroke="#888" stroke-width="0.7"/><text x="1.2" y="5" font-family="Liberation Sans,sans-serif" font-size="5.5" font-weight="bold" fill="#b02aa0">R</text><rect x="6" y="2" width="2.3" height="2.3" fill="#555"/><text x="1.5" y="9" font-family="Liberation Sans,sans-serif" font-size="3.6" font-weight="bold" fill="#222">LZ</text></svg>
<div class="t" style="left:208.5px;top:116px;color:#9a9a9a;font-size:7.85px">地质专题</div>
<div class="abs" style="left:270.5px;top:120.5px;width:6.5px;height:1px;background:#9a9a9a"></div>
<div class="abs" style="left:300.5px;top:117.5px;width:6.5px;height:6.5px;border:1px solid #8a8a8a"></div>
<svg style="left:330.5px;top:117.5px" width="7" height="7" viewBox="0 0 7 7"><path d="M0.3 0.3L6.7 6.7M6.7 0.3L0.3 6.7" stroke="#8a8a8a" stroke-width="0.8"/></svg>
<svg style="left:196.5px;top:134.8px" width="6" height="6" viewBox="0 0 6 6"><rect x="0.5" y="0.5" width="5" height="5" fill="#fff" stroke="#98a4b8" stroke-width="0.9"/><path d="M1.600 3H4.400" stroke="#3a4a8a" stroke-width="0.900"/></svg>
<div class="abs" style="left:205.5px;top:133.4px;width:8.3px;height:8.3px;border:1px solid #333;background:#fff"></div>
<div class="t" style="left:214.9px;top:133.4px;color:#000;font-size:7.85px">地质专题</div>
<svg style="left:209.0px;top:144.1px" width="6" height="6" viewBox="0 0 6 6"><rect x="0.5" y="0.5" width="5" height="5" fill="#fff" stroke="#98a4b8" stroke-width="0.9"/><path d="M1.600 3H4.400" stroke="#3a4a8a" stroke-width="0.900"/></svg>
<div class="abs" style="left:218.0px;top:142.7px;width:8.3px;height:8.3px;border:1px solid #333;background:#fff"></div>
<div class="t" style="left:227.4px;top:142.7px;color:#000;font-size:7.85px">成都培训班</div>
<svg style="left:221.5px;top:153.3px" width="6" height="6" viewBox="0 0 6 6"><rect x="0.5" y="0.5" width="5" height="5" fill="#fff" stroke="#98a4b8" stroke-width="0.9"/><path d="M1.600 3H4.400" stroke="#3a4a8a" stroke-width="0.900"/></svg>
<div class="abs" style="left:230.5px;top:151.9px;width:8.3px;height:8.3px;border:1px solid #333;background:#fff"></div>
<div class="t" style="left:239.9px;top:151.9px;color:#000;font-size:7.85px">工程地质模型</div>
<svg style="left:234.0px;top:162.6px" width="6" height="6" viewBox="0 0 6 6"><rect x="0.5" y="0.5" width="5" height="5" fill="#fff" stroke="#98a4b8" stroke-width="0.9"/><path d="M1.600 3H4.400M3 1.600V4.400" stroke="#3a4a8a" stroke-width="0.900"/></svg>
<div class="abs" style="left:243.0px;top:161.2px;width:8.3px;height:8.3px;border:1px solid #333;background:#fff"></div>
<svg style="left:243.0px;top:161.4px" width="8" height="8" viewBox="0 0 8 8"><path d="M1.5 4L3.2 5.8L6.6 1.8" stroke="#222" stroke-width="0.9" fill="none"/></svg>
<div class="t" style="left:252.4px;top:161.2px;color:#000;font-size:7.85px">土层</div>
<svg style="left:234.0px;top:171.8px" width="6" height="6" viewBox="0 0 6 6"><rect x="0.5" y="0.5" width="5" height="5" fill="#fff" stroke="#98a4b8" stroke-width="0.9"/><path d="M1.600 3H4.400M3 1.600V4.400" stroke="#3a4a8a" stroke-width="0.900"/></svg>
<div class="abs" style="left:243.0px;top:170.4px;width:8.3px;height:8.3px;border:1px solid #333;background:#fff"></div>
<svg style="left:243.0px;top:170.6px" width="8" height="8" viewBox="0 0 8 8"><path d="M1.5 4L3.2 5.8L6.6 1.8" stroke="#222" stroke-width="0.9" fill="none"/></svg>
<div class="t" style="left:252.4px;top:170.4px;color:#000;font-size:7.85px">岩层</div>
<svg style="left:234.0px;top:181.1px" width="6" height="6" viewBox="0 0 6 6"><rect x="0.5" y="0.5" width="5" height="5" fill="#fff" stroke="#98a4b8" stroke-width="0.9"/><path d="M1.600 3H4.400M3 1.600V4.400" stroke="#3a4a8a" stroke-width="0.900"/></svg>
<div class="abs" style="left:243.0px;top:179.7px;width:8.3px;height:8.3px;border:1px solid #333;background:#fff"></div>
<div class="t" style="left:252.4px;top:179.7px;color:#000;font-size:7.85px">地层体顶面</div>
<svg style="left:234.0px;top:190.4px" width="6" height="6" viewBox="0 0 6 6"><rect x="0.5" y="0.5" width="5" height="5" fill="#fff" stroke="#98a4b8" stroke-width="0.9"/><path d="M1.600 3H4.400M3 1.600V4.400" stroke="#3a4a8a" stroke-width="0.900"/></svg>
<div class="abs" style="left:243.0px;top:189.0px;width:8.3px;height:8.3px;border:1px solid #333;background:#fff"></div>
<div class="t" style="left:252.4px;top:189.0px;color:#000;font-size:7.85px">地层体底面</div>
<svg style="left:221.5px;top:199.6px" width="6" height="6" viewBox="0 0 6 6"><rect x="0.5" y="0.5" width="5" height="5" fill="#fff" stroke="#98a4b8" stroke-width="0.9"/><path d="M1.600 3H4.400M3 1.600V4.400" stroke="#3a4a8a" stroke-width="0.900"/></svg>
<div class="abs" style="left:230.5px;top:198.2px;width:8.3px;height:8.3px;border:1px solid #333;background:#fff"></div>
<svg style="left:230.5px;top:198.4px" width="8" height="8" viewBox="0 0 8 8"><path d="M1.5 4L3.2 5.8L6.6 1.8" stroke="#222" stroke-width="0.9" fill="none"/></svg>
<div class="t" style="left:239.9px;top:198.2px;color:#000;font-size:7.85px">钻孔_工程地质数据</div>
<svg style="left:0;top:0" width="360" height="300" viewBox="0 0 360 300"><path d="M201.5 137.8H205.5M214.0 147.1H218.0M226.5 156.3H230.5M239.0 165.6H243.0M239.0 174.8H243.0M239.0 184.1H243.0M239.0 193.4H243.0M226.5 202.6H230.5M199.3 140.8V146.1M211.8 150.1V155.3M224.3 159.3V199.6M236.8 160.3V162.6" stroke="#aaa" stroke-width="0.8" fill="none" stroke-dasharray="1 1"/></svg>
<div class="abs" style="left:186px;top:659px;width:1081px;height:12px;background:#f0f0f0"></div>
<div class="abs" style="left:186px;top:658.200px;width:254px;height:12.600px;background:#f2f2f2"></div>
<div class="t" style="left:199px;top:658.8px;color:#222;font-size:7.600px;word-spacing:2.600px">1 : 100</div>
<div class="abs" style="left:837px;top:659.8px;width:11px;height:9.2px;background:#c9c9c9"></div>
<svg style="left:1245px;top:660.5px" width="20" height="9" viewBox="0 0 20 9"><path d="M1 1.400L3.600 4L1 6.600" stroke="#333" stroke-width="1.100" fill="none"/><path d="M17 7.500H19M15 7.500H16M17.500 5.500H19" stroke="#bbb" stroke-width="0.800"/></svg>
<svg id="vcb" style="left:230px;top:656px" width="215" height="15" viewBox="230 656 215 15">
<rect x="237.800" y="660" width="10" height="6.400" fill="#d8d8d8" stroke="#555" stroke-width="0.700"/><path d="M238 662.200H248M238 664.400H248M240.400 660V666.400M243 660V666.400M245.600 660V666.400" stroke="#888" stroke-width="0.500"/>
<path d="M252 662.600L254.400 660.400H261.400V664.600L259 667H252Z" fill="#cfe4fa" stroke="#1a68c8" stroke-width="0.900" stroke-linejoin="round"/><path d="M252 662.600H259V667M259 662.600L261.400 660.400" fill="none" stroke="#1a68c8" stroke-width="0.800"/>
<circle cx="269" cy="662.400" r="2.600" fill="#f8c020" stroke="#e08a00" stroke-width="0.700"/><path d="M269 658.400V659.400M269 665.400V666.400M265 662.400H266M272 662.400H273M266.200 659.600L266.900 660.300M271.800 659.600L271.100 660.300M266.200 665.200L266.900 664.500" stroke="#e08a00" stroke-width="0.800"/><path d="M271 664.200L274.600 667.600M274.600 664.200L271 667.600" stroke="#e01818" stroke-width="1.200"/>
<circle cx="283.600" cy="662" r="2.600" fill="#f4f8fc" stroke="#1a68c8" stroke-width="0.900"/><path d="M281 667H287" stroke="#1a68c8" stroke-width="1"/><path d="M285.400 664.200L289 667.600M289 664.200L285.400 667.600" stroke="#e01818" stroke-width="1.200"/>
<path d="M294.400 661.600H300.600L299.800 665.600H295.400Z" fill="#eee" stroke="#555" stroke-width="0.700"/><path d="M294.400 662.400L292.600 661.200M296.600 661.600V660.400H298.600V661.600" fill="none" stroke="#555" stroke-width="0.700"/><circle cx="301.400" cy="664.400" r="1.500" fill="#fff" stroke="#1a68c8" stroke-width="0.700"/><path d="M301.400 666V667.400" stroke="#1a68c8" stroke-width="0.700"/>
<path d="M306.600 664.400H310.400M308.800 660V667.600" stroke="#1a68c8" stroke-width="1.300"/><path d="M309.600 661H315" stroke="#1a68c8" stroke-width="0.700" stroke-dasharray="1 0.600"/><path d="M311.600 662.800L316 667.400M316 662.800L311.600 667.400" stroke="#e01818" stroke-width="1.300"/>
<path d="M320.400 664.400H324.200M322.600 660V667.600" stroke="#1a68c8" stroke-width="1.300"/><path d="M323.400 661H329" stroke="#1a68c8" stroke-width="0.700" stroke-dasharray="1 0.600"/><circle cx="327.800" cy="663.800" r="1.600" fill="#fff" stroke="#1a68c8" stroke-width="0.700"/><path d="M327.800 665.400V667.400" stroke="#1a68c8" stroke-width="0.700"/>
<path d="M334 663.800L339 659.600L344 663.800M335.200 663V667.600H339" fill="none" stroke="#444" stroke-width="0.900"/><rect x="339.600" y="664.400" width="3.800" height="3.200" fill="#2a8a5a"/><path d="M340.400 664.400V663.200A1.100 1.100 0 0 1 342.600 663.200V664.400" fill="none" stroke="#2a8a5a" stroke-width="0.700"/>
<path d="M348.400 662L351 664.600A1.800 1.800 0 1 0 354.200 664.600L356 662.400" fill="none" stroke="#444" stroke-width="0.800"/><circle cx="356.200" cy="664.200" r="1.700" fill="#f4f4f4" stroke="#444" stroke-width="0.700"/>
<circle cx="367" cy="662.400" r="1.900" fill="#f4f8fc" stroke="#1a68c8" stroke-width="0.900"/><path d="M367 664.400V667" stroke="#1a68c8" stroke-width="1"/>
<rect x="376" y="661" width="6.600" height="5.600" fill="#f0f0f0" stroke="#333" stroke-width="0.800"/><path d="M377.400 661V659.800H380V661" fill="none" stroke="#333" stroke-width="0.700"/><circle cx="383.600" cy="664.400" r="1.500" fill="#fff" stroke="#555" stroke-width="0.700"/><path d="M384.600 665.600L385.800 667" stroke="#555" stroke-width="0.700"/>
<path d="M389.600 666.600V662.600L391.600 660.400H394.600L396.400 662.600V666.600Z" fill="#f4e0d8" stroke="#555" stroke-width="0.700"/><path d="M389.600 663.400H396.400M393 660.400V666.600" stroke="#c05030" stroke-width="0.700"/><circle cx="397.600" cy="663.400" r="1.500" fill="#fff" stroke="#1a68c8" stroke-width="0.700"/><path d="M397.600 665V667" stroke="#1a68c8" stroke-width="0.700"/>
<path d="M404 662.400L406 660.600H411V664.800L409 666.800H404Z" fill="#e4e4e4" stroke="#555" stroke-width="0.700"/><path d="M404 662.400H409V666.800M406.400 662.400V666.800M409 662.400L411 660.600" fill="none" stroke="#555" stroke-width="0.600"/><path d="M411.600 662V666" stroke="#555" stroke-width="0.700"/>
<path d="M417.400 659.600V667.600M417.400 661H427M426.400 659.600V662.400" fill="none" stroke="#333" stroke-width="0.900"/><path d="M419.600 665.600H421.600" stroke="#555" stroke-width="0.700"/><rect x="423" y="664" width="3.600" height="3" fill="#ddd" stroke="#555" stroke-width="0.600"/><path d="M423.800 664V663A1 1 0 0 1 425.800 663V664" fill="none" stroke="#555" stroke-width="0.600"/>
<path d="M436.600 661.400L434 663.800L436.600 666.200" stroke="#333" stroke-width="0.900" fill="none"/>
</svg>
<div class="abs" id="status" style="left:0;top:670.5px;width:1267px;height:16px;background:#d1d1d1;border-top:1px solid #bcbcbc"></div>
<div class="t" style="left:2px;top:674.500px;color:#111;font-size:8px">单击可进行选择; 按 Tab 键并单击可选择其他项目; 按 Ctrl 键并单击可将新项目添加到选择集; 按 Shift 键并单击可取消选择。</div>
<div class="abs" style="left:642.8px;top:673px;width:134.500px;height:12.400px;background:#fff;border:1px solid #c9c9c9"></div>
<svg style="left:769.500px;top:677.500px" width="6" height="4" viewBox="0 0 6 4"><path d="M0.500 0.500L3 3L5.500 0.500" stroke="#8a8a8a" stroke-width="0.800" fill="none"/></svg>
<div class="abs" style="left:851px;top:673px;width:135px;height:12.400px;background:#fff;border:1px solid #c9c9c9"></div>
<svg style="left:976.500px;top:677.500px" width="6" height="4" viewBox="0 0 6 4"><path d="M0.500 0.500L3 3L5.500 0.500" stroke="#8a8a8a" stroke-width="0.800" fill="none"/></svg>
<div class="t" style="left:854.500px;top:674.200px;color:#8a8a8a;font-size:7.600px">主模型</div>
<div class="t" style="left:797px;top:674px;color:#111;font-size:7.600px;font-weight:bold">:0</div>
<svg style="left:620px;top:671px" width="240" height="15" viewBox="620 671 240 15">
<path d="M627 678.400L629.600 676.800L632.200 678.400V683L629.600 684.600L627 683Z" fill="#4a90e0" stroke="#1a58a8" stroke-width="0.700"/><rect x="629" y="673.600" width="4" height="4" fill="#5ab050" stroke="#2a7a2a" stroke-width="0.600"/><rect x="634" y="677.400" width="3" height="7" rx="1.400" fill="#f4f8fc" stroke="#1a58a8" stroke-width="0.800"/>
<path d="M786 674.400H793.400L790.400 678V681.600L788.600 682.800V678Z" fill="#bcbcbc" stroke="#999" stroke-width="0.600"/><path d="M784 684L787 680.600" stroke="#aaa" stroke-width="1.400"/>
<rect x="818.800" y="674" width="10" height="10.400" rx="1" fill="#f8f8f8" stroke="#222" stroke-width="1"/><path d="M822.600 678H827M822.600 680.200H827M822.600 682.400H827" stroke="#222" stroke-width="0.900"/><rect x="820.200" y="675.400" width="1.600" height="1.600" fill="#222"/>
<rect x="838" y="674.400" width="6.600" height="8" fill="#9a9a9a"/><path d="M836 682.600L840.400 678.600" stroke="#b4b4b4" stroke-width="1.200"/><path d="M836.400 679.400H838.600V684" stroke="#a8a8a8" stroke-width="0.700" fill="none"/>
</svg>
<!-- right status icons -->
<svg style="left:1105px;top:671px" width="45" height="15" viewBox="1105 671 45 15">
<path d="M1106.400 675.600C1108 673.400 1112.400 673.400 1114.400 675.600L1112.600 679H1108.400Z" fill="#f0c030" stroke="#b88a10" stroke-width="0.600"/><path d="M1109.400 677.400V684L1111 682.600L1112 685L1113 684.600L1112 682.200H1113.600Z" fill="#fff" stroke="#333" stroke-width="0.600"/>
<path d="M1121.600 683.600L1127.600 675.600V683.600Z" fill="#dbe8f8" stroke="#2a70d0" stroke-width="0.800"/><path d="M1121.600 681H1127.600M1123 679H1127.600" stroke="#2a70d0" stroke-width="0.600"/><path d="M1127 673.600L1130.400 677M1130.400 673.600L1127 677" stroke="#e01818" stroke-width="1"/><path d="M1128.400 679V684.600L1129.800 683.400L1130.600 685.200" fill="#fff" stroke="#444" stroke-width="0.600"/>
</svg>
<!-- IME toolbar -->
<div class="abs" style="left:1148.500px;top:668px;width:118.500px;height:17.200px;background:#fdfdfd;border-bottom:1px solid #d8d8d8"></div>
<svg id="ime" style="left:1128px;top:663px" width="139" height="24" viewBox="1128 663 139 24">
<rect x="1132.500" y="666.600" width="15" height="15" rx="3" fill="#f2601c" transform="rotate(-12 1140 674)"/>
<text x="1134.200" y="679.400" font-size="14.500" font-weight="bold" fill="#fff" font-family="Liberation Sans,sans-serif" transform="rotate(-12 1140 674)" textLength="12" lengthAdjust="spacingAndGlyphs">S</text>
<text x="1158.200" y="679.400" font-size="10.500" font-weight="bold" fill="#1a6fd0" text-anchor="middle" font-family="Noto Sans CJK SC,sans-serif">中</text>
<circle cx="1169.600" cy="672.800" r="1.300" fill="none" stroke="#1a6fd0" stroke-width="1"/><path d="M1174.400 675.400C1175.600 675.400 1175.600 677.600 1173.800 678.800" stroke="#1a6fd0" stroke-width="1.500" fill="none"/>
<circle cx="1187.200" cy="675.400" r="4.700" fill="none" stroke="#1a6fd0" stroke-width="1.100"/><path d="M1185.600 673.400V674.800M1188.800 673.400V674.800" stroke="#1a6fd0" stroke-width="0.900"/><path d="M1185 676.800C1186 678.400 1188.400 678.400 1189.400 676.800" stroke="#1a6fd0" stroke-width="0.800" fill="none"/>
<rect x="1200" y="670.200" width="3.600" height="6.600" rx="1.800" fill="#1a6fd0"/><path d="M1198.400 675.200C1198.400 679.600 1205.200 679.600 1205.200 675.200M1201.800 678.600V680.600M1199.800 680.600H1203.800" stroke="#1a6fd0" stroke-width="0.900" fill="none"/>
<rect x="1211" y="671.600" width="10.800" height="7.400" rx="1" fill="#1a6fd0"/><path d="M1212.600 673.600H1220.200M1212.600 675.400H1220.200" stroke="#fff" stroke-width="0.800" stroke-dasharray="1 0.700"/><path d="M1214 677.400H1218.800" stroke="#fff" stroke-width="0.800"/>
<circle cx="1231" cy="672.400" r="1.800" fill="#b8c4d4"/><path d="M1227.600 679.800C1227.600 675.800 1234.400 675.800 1234.400 679.800Z" fill="#b8c4d4"/><rect x="1231.600" y="676.800" width="6" height="3.600" fill="#fdfdfd" stroke="#b8c4d4" stroke-width="0.700"/>
<path d="M1243.200 670.800L1245 670.200C1245.400 671.400 1246.800 671.400 1247.200 670.200L1249 670.800L1250.600 673L1249 674.200V680H1243.200V674.200L1241.600 673Z" fill="#1a6fd0"/>
<rect x="1255" y="670.600" width="4" height="4" fill="#1a6fd0"/><rect x="1260" y="670.600" width="4" height="4" fill="#5aa0e8"/><rect x="1255" y="675.600" width="4" height="4" fill="#1a6fd0"/><rect x="1260" y="675.600" width="4" height="4" fill="#1a6fd0"/>
</svg>

<div class="abs" id="taskbar" style="left:0;top:686.200px;width:1267px;height:27px;background:linear-gradient(90deg,#1f3a43 0%,#1c333e 30%,#18293a 65%,#14233a 100%)"></div>
<div class="abs" style="left:195.700px;top:686.200px;width:30.300px;height:27px;background:rgba(255,255,255,0.120)"></div>
<div class="abs" style="left:36.600px;top:711px;width:25.300px;height:2px;background:#8fc0e8"></div>
<div class="abs" style="left:68.700px;top:711px;width:24.700px;height:2px;background:#8fc0e8"></div>
<div class="abs" style="left:101px;top:711px;width:25.300px;height:2px;background:#8fc0e8"></div>
<div class="abs" style="left:133.300px;top:711px;width:24.500px;height:2px;background:#8fc0e8"></div>
<div class="abs" style="left:165.400px;top:711px;width:24.600px;height:2px;background:#8fc0e8"></div>
<div class="abs" style="left:195.700px;top:711px;width:30.300px;height:2px;background:#9fcaf0"></div>
<svg id="tbicons" style="left:0;top:686px" width="1267" height="27" viewBox="0 686 1267 27">
<!-- start -->
<path d="M10.200 695.800L14.800 695.200V699.400H10.200ZM15.600 695.100L21.400 694.300V699.400H15.600ZM10.200 700.200H14.800V704.400L10.200 703.800ZM15.600 700.200H21.400V705.400L15.600 704.600Z" fill="#fff"/>
<!-- chrome -->
<circle cx="49.200" cy="699.700" r="7.500" fill="#e8453c"/>
<path d="M49.200 699.700L42.700 703.450A7.500 7.500 0 0 1 42.700 695.950Z" fill="#e8453c"/>
<path d="M49.200 699.700L42.600 696A7.500 7.500 0 0 0 49.200 707.200L52.600 701.400Z" fill="#34a853"/>
<path d="M49.200 699.700L56.700 699.700A7.500 7.500 0 0 1 49.200 707.200L52.400 701.600Z" fill="#fbc116"/>
<path d="M49.200 692.200A7.500 7.500 0 0 1 56.600 701L49.200 699.700Z" fill="#e8453c"/>
<path d="M49.200 696.300H55.900A7.500 7.500 0 0 1 49.600 707.200L52.800 701.500Z" fill="#fbc116"/>
<circle cx="49.200" cy="699.700" r="3.400" fill="#fff"/><circle cx="49.200" cy="699.700" r="2.700" fill="#4a8af4"/>
<!-- explorer -->
<path d="M74.600 694.600H79.600L80.800 695.800H88.400V705.200H74.600Z" fill="#f8c84a"/><rect x="74.600" y="697" width="13.800" height="8.200" fill="#fbd872"/><rect x="77.400" y="700.600" width="8.200" height="4.600" fill="#3a8ae0"/><rect x="79.400" y="702.600" width="4.200" height="2.600" fill="#fbd872"/>
<!-- chart app -->
<rect x="106.400" y="694" width="15.600" height="11.400" fill="#f0e8d8" stroke="#8a6a3a" stroke-width="0.600"/><path d="M107 703L110 699L113 701L117 696L121 699V705H107Z" fill="#d83a2a"/><path d="M107 704L111 701L115 703L121 700V705.400H107Z" fill="#5aa83a"/><path d="M109 694V705M113 694V705M117 694V705" stroke="#3a7a2a" stroke-width="0.700"/><circle cx="119.600" cy="694.600" r="2.600" fill="#3a6ad0"/><path d="M119.600 693L120.200 694.300H121.400L120.400 695.100L120.800 696.400L119.600 695.600L118.400 696.400L118.800 695.100L117.800 694.300H119Z" fill="#fff"/>
<!-- acad 1,2 -->
<g id="acadicon"><rect x="138.600" y="692" width="15.800" height="15.600" fill="#d8251f"/><rect x="138.600" y="692" width="15.800" height="5" fill="#e8473f"/><path d="M146.500 695L151.200 705H148.700L147.800 702.900H145.200L144.300 705H141.800ZM146.500 698.700L145.700 701.200H147.300Z" fill="#7a0c0c" fill-rule="evenodd"/><path d="M146.500 695L151.200 705H149.600L146.500 697.400Z" fill="#a81414"/></g>
<use href="#acadicon" x="32.700" y="0"/>
<!-- revit -->
<rect x="204.600" y="692.400" width="13.800" height="14" fill="#dfe9f4"/><text x="211.600" y="704.600" font-size="14" font-weight="bold" fill="#1a5cb4" text-anchor="middle" font-family="Liberation Sans,sans-serif">R</text>
<!-- tray -->
<path d="M1023 694.600H1026V699H1027.200V694.600H1030.200V704L1028.400 702.200L1026.600 704L1024.800 702.200L1023 704Z" fill="#fff"/>
<rect x="1056.200" y="694.400" width="3.600" height="6.600" rx="1.800" fill="#e8e8e8"/><path d="M1054.600 699.200C1054.600 703.600 1061.400 703.600 1061.400 699.200M1058 702.600V704.600" stroke="#e8e8e8" stroke-width="0.900" fill="none"/>
<circle cx="1074.800" cy="699.200" r="4.600" fill="#e86a7a"/><circle cx="1074.800" cy="699.200" r="2" fill="#f8c8d0"/><path d="M1074.800 694.400V704M1070 699.200H1079.600M1071.400 695.800L1078.200 702.600M1078.200 695.800L1071.400 702.600" stroke="#c84a5a" stroke-width="0.500"/>
<path d="M1090.400 694.400L1095.200 695.800V699.600C1095.200 702.400 1093 704 1090.400 704.800C1087.800 704 1085.600 702.400 1085.600 699.600V695.800Z" fill="#f0f0f0"/><path d="M1090.400 694.400V704.800M1085.600 699.400H1095.200" stroke="#222" stroke-width="0.800"/><circle cx="1094.200" cy="703.200" r="2.400" fill="#e02a2a"/><path d="M1093.200 702.200L1095.200 704.200M1095.200 702.200L1093.200 704.200" stroke="#fff" stroke-width="0.600"/>
<path d="M1103 704.600A8 8 0 0 1 1111 696.600M1105.400 704.600A5.600 5.600 0 0 1 1111 699M1107.800 704.600A3.200 3.200 0 0 1 1111 701.400" stroke="#b8b8b8" stroke-width="0.900" fill="none"/><circle cx="1110.200" cy="704" r="0.900" fill="#ccc"/>
<rect x="1117.400" y="696.800" width="9.400" height="5.400" fill="none" stroke="#e8e8e8" stroke-width="0.900"/><rect x="1118.400" y="697.800" width="6" height="3.400" fill="#e8e8e8"/><path d="M1116.600 696.200L1119 694.400" stroke="#e8e8e8" stroke-width="0.900"/>
<path d="M1133 697.800H1135L1137.800 695.400V703.400L1135 701H1133Z" fill="#e8e8e8"/><path d="M1139.200 697.400C1140.200 698.600 1140.200 700.200 1139.200 701.400M1140.800 696C1142.600 698 1142.600 700.800 1140.800 702.800" stroke="#e8e8e8" stroke-width="0.800" fill="none"/>
<text x="1152.800" y="703.200" font-size="9.600" fill="#f0f0f0" text-anchor="middle" font-family="Noto Sans CJK SC,sans-serif">中</text>
<rect x="1166.600" y="693.800" width="11" height="11" rx="2.600" fill="#f2601c" transform="rotate(-10 1172 699.300)"/><text x="1172.100" y="703.200" font-size="10" font-weight="bold" fill="#fff" text-anchor="middle" font-family="Liberation Sans,sans-serif" transform="rotate(-10 1172 699.300)">S</text>
<path d="M1240.400 694.600H1251V702.200H1246.600L1244.600 704.400V702.200H1240.400Z" fill="none" stroke="#f0f0f0" stroke-width="0.900" stroke-linejoin="round"/><circle cx="1249.600" cy="702.600" r="1.600" fill="#18293a" stroke="#f0f0f0" stroke-width="0.600"/>
<path d="M1263.800 687V713" stroke="#5a6a7a" stroke-width="0.600"/>
</svg>
<div class="t" style="left:1198px;top:689.100px;color:#fff;font-size:8.200px">11:40</div>
<div class="t" style="left:1190.500px;top:701.400px;color:#fff;font-size:8.400px;letter-spacing:0.250px">2023/7/5</div>

</div>
</body></html>
